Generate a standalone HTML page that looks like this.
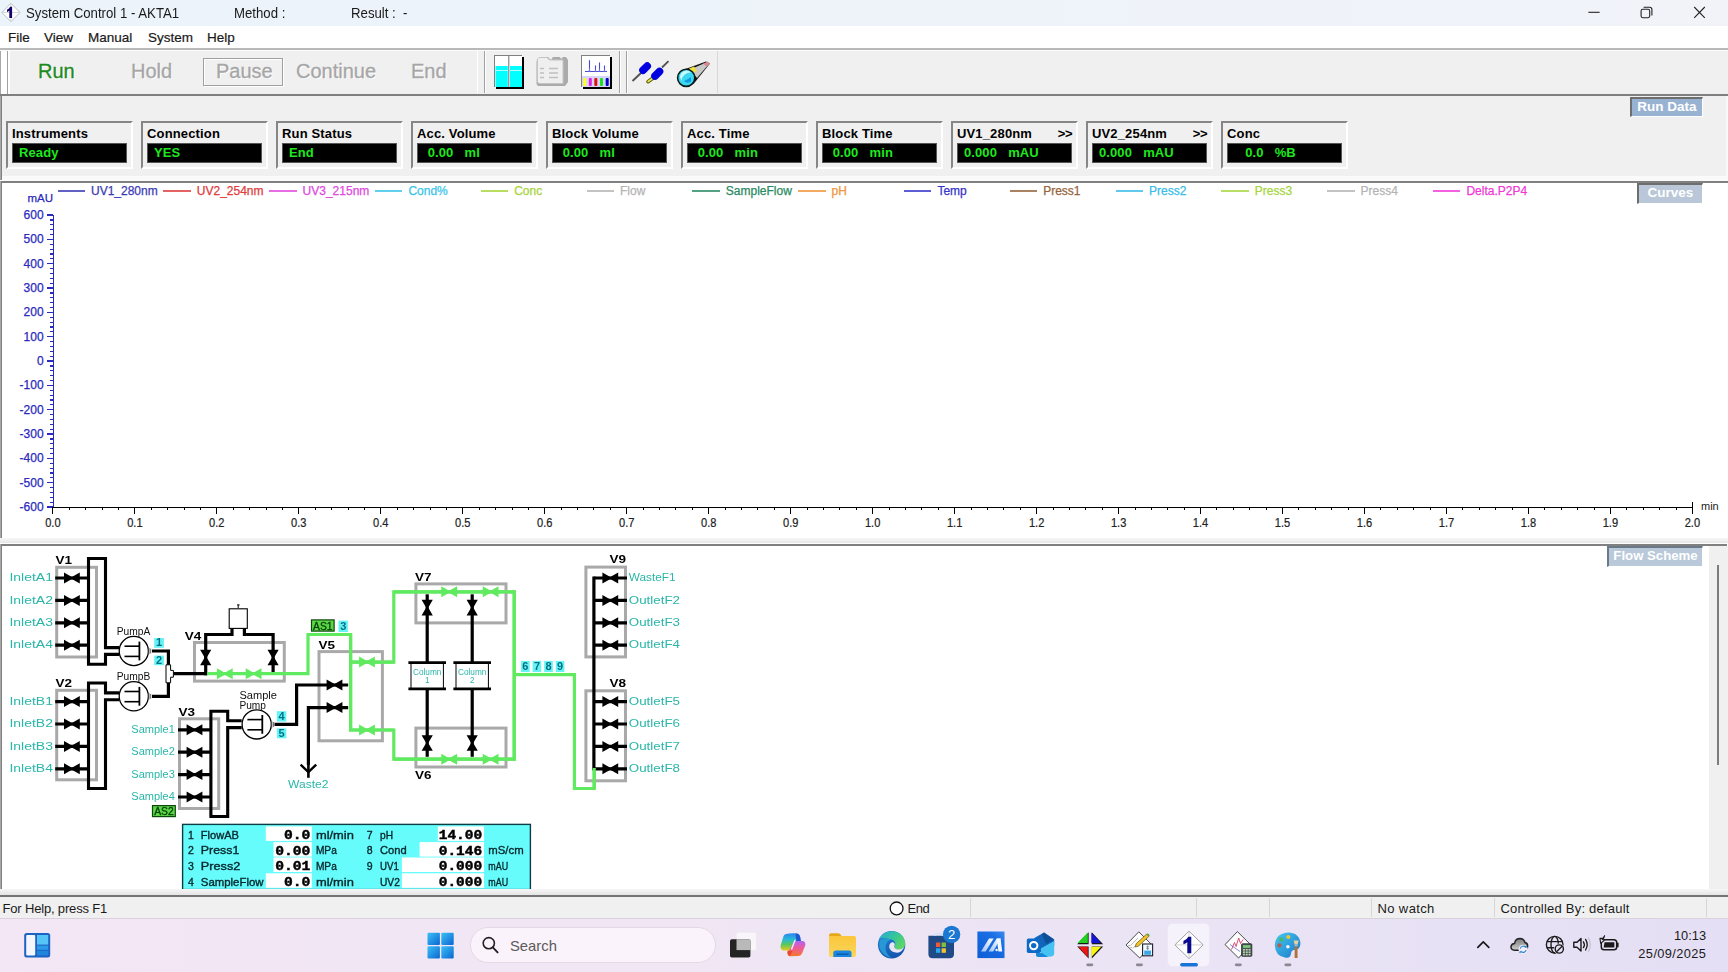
<!DOCTYPE html>
<html><head><meta charset="utf-8">
<style>
*{box-sizing:border-box;margin:0;padding:0}
html,body{width:1728px;height:972px;overflow:hidden;background:#fff;font-family:"Liberation Sans",sans-serif;}
.abs{position:absolute}
#title{left:0;top:0;width:1728px;height:26px;background:linear-gradient(90deg,#ebf3fb 0%,#eef3fa 50%,#f1f3f9 100%);}
#title span{position:absolute;top:6px;font-size:13.8px;color:#1a1a1a;white-space:nowrap;transform:scaleX(0.957);transform-origin:left center}
#menu{left:0;top:26px;width:1728px;height:22px;background:#fff}
#menu span{position:absolute;top:3.6px;font-size:13.5px;color:#1a1a1a;-webkit-text-stroke:0.2px #1a1a1a}
#toolbar{left:0;top:48px;width:1728px;height:47px;background:#f0f0f0;}
.tb{position:absolute;top:12px;font-size:20px;color:#a6a6a6;white-space:nowrap;text-shadow:1px 1px 0 #fff;-webkit-text-stroke:0.3px currentColor}
#rundata{left:0;top:95px;width:1728px;height:85px;background:#f0f0f0}
.rd{position:absolute;top:26px;width:127px;height:48px;border:2px solid;border-color:#868686 #fff #fff #868686;}
.rd b{position:absolute;left:4px;top:3px;font-size:13px;color:#000;white-space:nowrap;letter-spacing:0.15px}
.rd i{position:absolute;left:4px;top:20px;width:115px;height:20px;background:#000;border:1px solid #555;font-style:normal;font-weight:bold;font-size:13px;color:#1ee81e;line-height:17px;white-space:pre;padding-left:6px;letter-spacing:0.1px}
.rd u{position:absolute;right:4px;top:3px;font-size:13px;font-weight:bold;text-decoration:none;letter-spacing:-0.5px}
.plabel{position:absolute;color:#fff;font-weight:bold;font-size:13.5px;text-align:center;border:1px solid;border-color:#6e6e6e #fff #fff #6e6e6e;border-width:2px 1px 1px 2px;line-height:15px;white-space:nowrap}
#chart{left:0;top:181px;width:1728px;height:362px;background:#fff}
#flow{left:0;top:543px;width:1728px;height:354px;background:#fff}
#status{left:0;top:897px;width:1728px;height:21px;background:#f0f0f0}
#status span{position:absolute;top:4px;font-size:13px;color:#1a1a1a;white-space:nowrap}
#taskbar{left:0;top:918px;width:1728px;height:54px;background:linear-gradient(90deg,#f3e6f5 0%,#f0e6f4 40%,#ebe4f5 65%,#e5dff5 100%)}
.sep{position:absolute;top:1px;width:1px;height:19px;background:#d6d6d6}
</style></head><body>
<div id="title" class="abs">
<svg class="abs" style="left:0;top:0" width="1728" height="26">
<path d="M10.9 3.3 L20 12.5 L10.9 21.7 L1.9 12.5 Z" fill="#fff" stroke="#b4b8bc" stroke-width="0.9"/>
<path d="M2.5 12.5 H19.4 M10.9 4 V21" stroke="#c4c8c4" stroke-width="0.7"/>
<path d="M12.1 6.8 V18.1 H9.3 V10.7 Q8.2 11.5 7 11.9 V9.7 Q9.3 8.8 10.1 6.8 Z" fill="#12066e"/>
<path d="M1588.4 12.3 H1599.6" stroke="#222" stroke-width="1.1"/>
<rect x="1641.1" y="9.3" width="8.6" height="8.4" rx="1.6" fill="none" stroke="#222" stroke-width="1.1"/>
<path d="M1643.6 7.2 H1649.6 Q1651.9 7.2 1651.9 9.5 V15.6" fill="none" stroke="#222" stroke-width="1.1"/>
<path d="M1694.2 7 L1704.8 17.8 M1704.8 7 L1694.2 17.8" stroke="#222" stroke-width="1.1"/>
</svg>
<span style="left:26px">System Control 1 - AKTA1</span>
<span style="left:234px">Method :</span>
<span style="left:351px">Result :&nbsp; -</span>
</div>
<div id="menu" class="abs">
<span style="left:8px">File</span><span style="left:44px">View</span><span style="left:88px">Manual</span><span style="left:148px">System</span><span style="left:207px">Help</span>
</div>
<div id="toolbar" class="abs">
<span class="tb" style="left:38px;color:#1e8a1e">Run</span>
<span class="tb" style="left:131px">Hold</span>
<span class="tb" style="left:216px">Pause</span>
<span class="tb" style="left:296px">Continue</span>
<span class="tb" style="left:411px">End</span>

<div class="abs" style="left:0;top:0;width:1728px;height:2px;background:#b9b9b9"></div>
<div class="abs" style="left:0;top:2px;width:1728px;height:1px;background:#fbfbfb"></div>
<div class="abs" style="left:0;top:3px;width:1px;height:43px;background:#a8a8a8"></div>
<div class="abs" style="left:1px;top:3px;width:6px;height:43px;background:#fff"></div>
<div class="abs" style="left:7px;top:3px;width:1px;height:43px;background:#a0a0a0"></div>
<div class="abs" style="left:8px;top:3px;width:2px;height:43px;background:#fff"></div>
<div class="abs" style="left:203px;top:10px;width:80px;height:28px;border:1px solid #a0a0a0;box-shadow:inset 1px 1px 0 #fff, 1px 1px 0 #fff"></div>
<div class="abs" style="left:477px;top:3px;width:1px;height:42px;background:#fff"></div>
<div class="abs" style="left:484px;top:3px;width:1px;height:42px;background:#a0a0a0"></div>
<div class="abs" style="left:485px;top:3px;width:1px;height:42px;background:#fff"></div>
<div class="abs" style="left:619px;top:3px;width:1px;height:42px;background:#a0a0a0"></div>
<div class="abs" style="left:620px;top:3px;width:1px;height:42px;background:#fff"></div>
<div class="abs" style="left:626px;top:3px;width:1px;height:42px;background:#a0a0a0"></div>
<div class="abs" style="left:627px;top:3px;width:1px;height:42px;background:#fff"></div>
<div class="abs" style="left:717px;top:3px;width:1px;height:42px;background:#d8d8d8"></div>

<svg class="abs" style="left:0;top:0" width="1728" height="47" viewBox="0 48 1728 47">
<!-- icon1 -->
<rect x="496" y="57" width="28" height="32" fill="#000"/>
<rect x="494" y="55" width="28" height="32" fill="#fff"/>
<rect x="494" y="55" width="28" height="1" fill="#808080"/><rect x="494" y="55" width="1" height="32" fill="#808080"/>
<rect x="495.5" y="66" width="12.3" height="21" fill="#00ffff"/><rect x="510" y="66" width="12" height="21" fill="#00ffff"/>
<rect x="495.5" y="70" width="26.5" height="1" fill="#b0ffff"/>
<rect x="508.3" y="56" width="1" height="31" fill="#707070"/>
<!-- icon2 -->
<path d="M539 59 L544 57 H548 L551 60 L553 57 H560 L561 59 L563 57 H566 L568 60 V82 L565 86 H538 L536.5 84 V61 Z" fill="#ababab"/>
<path d="M537.5 59 L539 57.5 H547 L549.5 60 H563 V83.5 H539 L537.5 82 Z" fill="#efefef" stroke="#c4c4c4" stroke-width="1"/>
<g stroke="#c0c0c0" stroke-width="1.3"><path d="M540 68.5h4M549 68.5h9M540 73h4M549 73h9M540 77.5h4M549 77.5h9"/></g>
<!-- icon3 -->
<rect x="583" y="57" width="29" height="32" fill="#000"/>
<rect x="581" y="55" width="29" height="32" fill="#fff"/>
<rect x="581" y="55" width="29" height="1" fill="#808080"/><rect x="581" y="55" width="1" height="32" fill="#808080"/>
<rect x="582" y="76" width="28" height="11" fill="#d6d6fa"/>
<path d="M585 71.5 H607 M589.5 71.5 V60.2 M595.5 71.5 V65.6 M599.5 71.5 V62.6 M604.5 71.5 V65.6" fill="none" stroke="#4848d4" stroke-width="1.1"/><path d="M588 71.5 Q589.3 70 589.5 67 Q589.7 70 591 71.5 M594.2 71.5 Q595.4 70.5 595.5 68.5 Q595.6 70.5 596.8 71.5 M598.2 71.5 Q599.4 70.5 599.5 68 Q599.6 70.5 600.8 71.5 M603.2 71.5 Q604.4 70.5 604.5 68.5 Q604.6 70.5 605.8 71.5" fill="#8080e0" stroke="none"/>
<rect x="583.3" y="78" width="3" height="8" rx="1" fill="#ffff20"/><rect x="588.8" y="78" width="3" height="8" rx="1" fill="#e020e0"/><rect x="594.3" y="78" width="3" height="8" rx="1" fill="#e01010"/><rect x="600" y="78" width="3" height="8" rx="1" fill="#20e020"/><rect x="605.7" y="78" width="3" height="8" rx="1" fill="#0000c8"/>
<!-- icon4 -->
<g stroke-linecap="butt">
<line x1="632.5" y1="81" x2="641" y2="73" stroke="#505050" stroke-width="1.8"/>
<line x1="643" y1="70.3" x2="647.2" y2="66.1" stroke="#0000e0" stroke-width="7.6" stroke-linecap="round"/>
<line x1="662" y1="67.5" x2="668.5" y2="61.2" stroke="#505050" stroke-width="1.8"/>
<line x1="648" y1="81.7" x2="653" y2="78" stroke="#606000" stroke-width="3.6" stroke-linecap="round"/>
<line x1="648.2" y1="81.5" x2="653" y2="78" stroke="#e8e860" stroke-width="1.6" stroke-linecap="round"/>
<line x1="655" y1="76" x2="659.5" y2="71.5" stroke="#0000e0" stroke-width="7.6" stroke-linecap="round"/>
</g>
<!-- icon5 -->
<path d="M680 71 L706 61.5 L710 63.5 L693.5 84 Z" fill="#111"/>
<path d="M690 69.5 L705 63 L708.5 64.5 L697 78 Z" fill="#c8c8c8"/>
<path d="M703 63.8 L707.5 61.6 L710 63.4 L707 66.8 Z" fill="#d88a92"/>
<path d="M689 68.5 L694 66.5 L697 71 L693 73 Z" fill="#f0e040"/>
<circle cx="686.2" cy="77.8" r="8.6" fill="#3cd8f0" stroke="#0a1a1a" stroke-width="1.6"/>
<path d="M680 77 A6.5 6.5 0 0 1 691 72.5 A9 9 0 0 0 681.5 81 Z" fill="#c8fbff"/>
<path d="M684 81 Q687 84 691 81.5 L691 77 L688 79 Z" fill="#1098e0"/>
</svg>

</div>
<div id="rundata" class="abs">
<div class="abs" style="left:0;top:0;width:1px;height:85px;background:#a8a8a8"></div><div class="abs" style="left:0;top:-1px;width:1728px;height:2px;background:#808080"></div>
<div class="abs" style="left:1px;top:-1px;width:1px;height:86px;background:#808080"></div>
<div class="rd" style="left:6px"><b>Instruments</b><i>Ready</i></div>
<div class="rd" style="left:141px"><b>Connection</b><i>YES</i></div>
<div class="rd" style="left:276px"><b>Run Status</b><i>End</i></div>
<div class="rd" style="left:411px"><b>Acc. Volume</b><i> 0.00   ml</i></div>
<div class="rd" style="left:546px"><b>Block Volume</b><i> 0.00   ml</i></div>
<div class="rd" style="left:681px"><b>Acc. Time</b><i> 0.00   min</i></div>
<div class="rd" style="left:816px"><b>Block Time</b><i> 0.00   min</i></div>
<div class="rd" style="left:951px"><b>UV1_280nm</b><u>>></u><i>0.000   mAU</i></div>
<div class="rd" style="left:1086px"><b>UV2_254nm</b><u>>></u><i>0.000   mAU</i></div>
<div class="rd" style="left:1221px"><b>Conc</b><i>   0.0   %B</i></div>
<div class="plabel" style="left:1630px;top:2px;width:73px;height:20px;background:#98b2d2">Run Data</div>
<div class="abs" style="left:2px;top:81px;width:1726px;height:5px;background:#fafafa"></div><div class="abs" style="left:1726px;top:1px;width:2px;height:84px;background:#fafafa"></div>
</div>
<div id="chart" class="abs">
<svg class="abs" style="left:0;top:0" width="1728" height="362" viewBox="0 181 1728 362" font-family="Liberation Sans, sans-serif" shape-rendering="crispEdges">
<rect x="57.5" y="190" width="27.5" height="2" fill="#3a3ab4" opacity="0.8"/>
<text x="91.0" y="195" font-size="12" fill="#3a3ab4" stroke="#3a3ab4" stroke-width="0.25" shape-rendering="auto">UV1_280nm</text>
<rect x="163.3" y="190" width="27.5" height="2" fill="#e03c3c" opacity="0.8"/>
<text x="196.8" y="195" font-size="12" fill="#e03c3c" stroke="#e03c3c" stroke-width="0.25" shape-rendering="auto">UV2_254nm</text>
<rect x="269.1" y="190" width="27.5" height="2" fill="#e048e0" opacity="0.8"/>
<text x="302.6" y="195" font-size="12" fill="#e048e0" stroke="#e048e0" stroke-width="0.25" shape-rendering="auto">UV3_215nm</text>
<rect x="374.9" y="190" width="27.5" height="2" fill="#38c4e8" opacity="0.8"/>
<text x="408.4" y="195" font-size="12" fill="#38c4e8" stroke="#38c4e8" stroke-width="0.25" shape-rendering="auto">Cond%</text>
<rect x="480.7" y="190" width="27.5" height="2" fill="#a6d438" opacity="0.8"/>
<text x="514.2" y="195" font-size="12" fill="#a6d438" stroke="#a6d438" stroke-width="0.25" shape-rendering="auto">Conc</text>
<rect x="586.5" y="190" width="27.5" height="2" fill="#b4b4b4" opacity="0.8"/>
<text x="620.0" y="195" font-size="12" fill="#b4b4b4" stroke="#b4b4b4" stroke-width="0.25" shape-rendering="auto">Flow</text>
<rect x="692.3" y="190" width="27.5" height="2" fill="#2a8a64" opacity="0.8"/>
<text x="725.8" y="195" font-size="12" fill="#2a8a64" stroke="#2a8a64" stroke-width="0.25" shape-rendering="auto">SampleFlow</text>
<rect x="798.1" y="190" width="27.5" height="2" fill="#f0963c" opacity="0.8"/>
<text x="831.6" y="195" font-size="12" fill="#f0963c" stroke="#f0963c" stroke-width="0.25" shape-rendering="auto">pH</text>
<rect x="903.9" y="190" width="27.5" height="2" fill="#3434c8" opacity="0.8"/>
<text x="937.4" y="195" font-size="12" fill="#3434c8" stroke="#3434c8" stroke-width="0.25" shape-rendering="auto">Temp</text>
<rect x="1009.7" y="190" width="27.5" height="2" fill="#96643c" opacity="0.8"/>
<text x="1043.2" y="195" font-size="12" fill="#96643c" stroke="#96643c" stroke-width="0.25" shape-rendering="auto">Press1</text>
<rect x="1115.5" y="190" width="27.5" height="2" fill="#38bce8" opacity="0.8"/>
<text x="1149.0" y="195" font-size="12" fill="#38bce8" stroke="#38bce8" stroke-width="0.25" shape-rendering="auto">Press2</text>
<rect x="1221.3" y="190" width="27.5" height="2" fill="#a6d640" opacity="0.8"/>
<text x="1254.8" y="195" font-size="12" fill="#a6d640" stroke="#a6d640" stroke-width="0.25" shape-rendering="auto">Press3</text>
<rect x="1327.1" y="190" width="27.5" height="2" fill="#b4b4b4" opacity="0.8"/>
<text x="1360.6" y="195" font-size="12" fill="#b4b4b4" stroke="#b4b4b4" stroke-width="0.25" shape-rendering="auto">Press4</text>
<rect x="1432.9" y="190" width="27.5" height="2" fill="#f038d8" opacity="0.8"/>
<text x="1466.4" y="195" font-size="12" fill="#f038d8" stroke="#f038d8" stroke-width="0.25" shape-rendering="auto">Delta.P2P4</text>
<text x="27.5" y="202.2" font-size="11.5" fill="#2a2abc" stroke="#2a2abc" stroke-width="0.25">mAU</text>
<rect x="52.6" y="215" width="1.6" height="293" fill="#2a2abc"/>
<rect x="46.5" y="214.4" width="6.5" height="1.2" fill="#2a2abc"/>
<text x="43.6" y="218.9" font-size="12" fill="#2a2abc" stroke="#2a2abc" stroke-width="0.25" text-anchor="end">600</text>
<rect x="49.8" y="219.3" width="3" height="1.2" fill="#2a2abc"/>
<rect x="49.8" y="224.1" width="3" height="1.2" fill="#2a2abc"/>
<rect x="49.8" y="229.0" width="3" height="1.2" fill="#2a2abc"/>
<rect x="49.8" y="233.9" width="3" height="1.2" fill="#2a2abc"/>
<rect x="46.5" y="238.7" width="6.5" height="1.2" fill="#2a2abc"/>
<text x="43.6" y="243.2" font-size="12" fill="#2a2abc" stroke="#2a2abc" stroke-width="0.25" text-anchor="end">500</text>
<rect x="49.8" y="243.6" width="3" height="1.2" fill="#2a2abc"/>
<rect x="49.8" y="248.5" width="3" height="1.2" fill="#2a2abc"/>
<rect x="49.8" y="253.3" width="3" height="1.2" fill="#2a2abc"/>
<rect x="49.8" y="258.2" width="3" height="1.2" fill="#2a2abc"/>
<rect x="46.5" y="263.1" width="6.5" height="1.2" fill="#2a2abc"/>
<text x="43.6" y="267.6" font-size="12" fill="#2a2abc" stroke="#2a2abc" stroke-width="0.25" text-anchor="end">400</text>
<rect x="49.8" y="267.9" width="3" height="1.2" fill="#2a2abc"/>
<rect x="49.8" y="272.8" width="3" height="1.2" fill="#2a2abc"/>
<rect x="49.8" y="277.7" width="3" height="1.2" fill="#2a2abc"/>
<rect x="49.8" y="282.5" width="3" height="1.2" fill="#2a2abc"/>
<rect x="46.5" y="287.4" width="6.5" height="1.2" fill="#2a2abc"/>
<text x="43.6" y="291.9" font-size="12" fill="#2a2abc" stroke="#2a2abc" stroke-width="0.25" text-anchor="end">300</text>
<rect x="49.8" y="292.3" width="3" height="1.2" fill="#2a2abc"/>
<rect x="49.8" y="297.1" width="3" height="1.2" fill="#2a2abc"/>
<rect x="49.8" y="302.0" width="3" height="1.2" fill="#2a2abc"/>
<rect x="49.8" y="306.9" width="3" height="1.2" fill="#2a2abc"/>
<rect x="46.5" y="311.7" width="6.5" height="1.2" fill="#2a2abc"/>
<text x="43.6" y="316.2" font-size="12" fill="#2a2abc" stroke="#2a2abc" stroke-width="0.25" text-anchor="end">200</text>
<rect x="49.8" y="316.6" width="3" height="1.2" fill="#2a2abc"/>
<rect x="49.8" y="321.5" width="3" height="1.2" fill="#2a2abc"/>
<rect x="49.8" y="326.3" width="3" height="1.2" fill="#2a2abc"/>
<rect x="49.8" y="331.2" width="3" height="1.2" fill="#2a2abc"/>
<rect x="46.5" y="336.1" width="6.5" height="1.2" fill="#2a2abc"/>
<text x="43.6" y="340.6" font-size="12" fill="#2a2abc" stroke="#2a2abc" stroke-width="0.25" text-anchor="end">100</text>
<rect x="49.8" y="340.9" width="3" height="1.2" fill="#2a2abc"/>
<rect x="49.8" y="345.8" width="3" height="1.2" fill="#2a2abc"/>
<rect x="49.8" y="350.7" width="3" height="1.2" fill="#2a2abc"/>
<rect x="49.8" y="355.5" width="3" height="1.2" fill="#2a2abc"/>
<rect x="46.5" y="360.4" width="6.5" height="1.2" fill="#2a2abc"/>
<text x="43.6" y="364.9" font-size="12" fill="#2a2abc" stroke="#2a2abc" stroke-width="0.25" text-anchor="end">0</text>
<rect x="49.8" y="365.3" width="3" height="1.2" fill="#2a2abc"/>
<rect x="49.8" y="370.1" width="3" height="1.2" fill="#2a2abc"/>
<rect x="49.8" y="375.0" width="3" height="1.2" fill="#2a2abc"/>
<rect x="49.8" y="379.9" width="3" height="1.2" fill="#2a2abc"/>
<rect x="46.5" y="384.7" width="6.5" height="1.2" fill="#2a2abc"/>
<text x="43.6" y="389.2" font-size="12" fill="#2a2abc" stroke="#2a2abc" stroke-width="0.25" text-anchor="end">-100</text>
<rect x="49.8" y="389.6" width="3" height="1.2" fill="#2a2abc"/>
<rect x="49.8" y="394.5" width="3" height="1.2" fill="#2a2abc"/>
<rect x="49.8" y="399.3" width="3" height="1.2" fill="#2a2abc"/>
<rect x="49.8" y="404.2" width="3" height="1.2" fill="#2a2abc"/>
<rect x="46.5" y="409.1" width="6.5" height="1.2" fill="#2a2abc"/>
<text x="43.6" y="413.6" font-size="12" fill="#2a2abc" stroke="#2a2abc" stroke-width="0.25" text-anchor="end">-200</text>
<rect x="49.8" y="413.9" width="3" height="1.2" fill="#2a2abc"/>
<rect x="49.8" y="418.8" width="3" height="1.2" fill="#2a2abc"/>
<rect x="49.8" y="423.7" width="3" height="1.2" fill="#2a2abc"/>
<rect x="49.8" y="428.5" width="3" height="1.2" fill="#2a2abc"/>
<rect x="46.5" y="433.4" width="6.5" height="1.2" fill="#2a2abc"/>
<text x="43.6" y="437.9" font-size="12" fill="#2a2abc" stroke="#2a2abc" stroke-width="0.25" text-anchor="end">-300</text>
<rect x="49.8" y="438.3" width="3" height="1.2" fill="#2a2abc"/>
<rect x="49.8" y="443.1" width="3" height="1.2" fill="#2a2abc"/>
<rect x="49.8" y="448.0" width="3" height="1.2" fill="#2a2abc"/>
<rect x="49.8" y="452.9" width="3" height="1.2" fill="#2a2abc"/>
<rect x="46.5" y="457.7" width="6.5" height="1.2" fill="#2a2abc"/>
<text x="43.6" y="462.2" font-size="12" fill="#2a2abc" stroke="#2a2abc" stroke-width="0.25" text-anchor="end">-400</text>
<rect x="49.8" y="462.6" width="3" height="1.2" fill="#2a2abc"/>
<rect x="49.8" y="467.5" width="3" height="1.2" fill="#2a2abc"/>
<rect x="49.8" y="472.3" width="3" height="1.2" fill="#2a2abc"/>
<rect x="49.8" y="477.2" width="3" height="1.2" fill="#2a2abc"/>
<rect x="46.5" y="482.1" width="6.5" height="1.2" fill="#2a2abc"/>
<text x="43.6" y="486.6" font-size="12" fill="#2a2abc" stroke="#2a2abc" stroke-width="0.25" text-anchor="end">-500</text>
<rect x="49.8" y="486.9" width="3" height="1.2" fill="#2a2abc"/>
<rect x="49.8" y="491.8" width="3" height="1.2" fill="#2a2abc"/>
<rect x="49.8" y="496.7" width="3" height="1.2" fill="#2a2abc"/>
<rect x="49.8" y="501.5" width="3" height="1.2" fill="#2a2abc"/>
<rect x="46.5" y="506.4" width="6.5" height="1.2" fill="#2a2abc"/>
<text x="43.6" y="510.9" font-size="12" fill="#2a2abc" stroke="#2a2abc" stroke-width="0.25" text-anchor="end">-600</text>
<rect x="52.5" y="506.5" width="1640" height="1.2" fill="#000"/>
<rect x="52.4" y="507" width="1" height="6.6" fill="#000"/>
<text x="52.9" y="527" font-size="12" fill="#222" stroke="#222" stroke-width="0.2" text-anchor="middle" textLength="15.4" lengthAdjust="spacingAndGlyphs">0.0</text>
<rect x="68.8" y="507" width="1" height="3.1" fill="#000"/>
<rect x="85.2" y="507" width="1" height="3.1" fill="#000"/>
<rect x="101.6" y="507" width="1" height="3.1" fill="#000"/>
<rect x="118.0" y="507" width="1" height="3.1" fill="#000"/>
<rect x="134.4" y="507" width="1" height="6.6" fill="#000"/>
<text x="134.9" y="527" font-size="12" fill="#222" stroke="#222" stroke-width="0.2" text-anchor="middle" textLength="15.4" lengthAdjust="spacingAndGlyphs">0.1</text>
<rect x="150.8" y="507" width="1" height="3.1" fill="#000"/>
<rect x="167.2" y="507" width="1" height="3.1" fill="#000"/>
<rect x="183.6" y="507" width="1" height="3.1" fill="#000"/>
<rect x="200.0" y="507" width="1" height="3.1" fill="#000"/>
<rect x="216.3" y="507" width="1" height="6.6" fill="#000"/>
<text x="216.8" y="527" font-size="12" fill="#222" stroke="#222" stroke-width="0.2" text-anchor="middle" textLength="15.4" lengthAdjust="spacingAndGlyphs">0.2</text>
<rect x="232.7" y="507" width="1" height="3.1" fill="#000"/>
<rect x="249.1" y="507" width="1" height="3.1" fill="#000"/>
<rect x="265.5" y="507" width="1" height="3.1" fill="#000"/>
<rect x="281.9" y="507" width="1" height="3.1" fill="#000"/>
<rect x="298.3" y="507" width="1" height="6.6" fill="#000"/>
<text x="298.8" y="527" font-size="12" fill="#222" stroke="#222" stroke-width="0.2" text-anchor="middle" textLength="15.4" lengthAdjust="spacingAndGlyphs">0.3</text>
<rect x="314.7" y="507" width="1" height="3.1" fill="#000"/>
<rect x="331.1" y="507" width="1" height="3.1" fill="#000"/>
<rect x="347.5" y="507" width="1" height="3.1" fill="#000"/>
<rect x="363.9" y="507" width="1" height="3.1" fill="#000"/>
<rect x="380.3" y="507" width="1" height="6.6" fill="#000"/>
<text x="380.8" y="527" font-size="12" fill="#222" stroke="#222" stroke-width="0.2" text-anchor="middle" textLength="15.4" lengthAdjust="spacingAndGlyphs">0.4</text>
<rect x="396.7" y="507" width="1" height="3.1" fill="#000"/>
<rect x="413.1" y="507" width="1" height="3.1" fill="#000"/>
<rect x="429.5" y="507" width="1" height="3.1" fill="#000"/>
<rect x="445.9" y="507" width="1" height="3.1" fill="#000"/>
<rect x="462.3" y="507" width="1" height="6.6" fill="#000"/>
<text x="462.8" y="527" font-size="12" fill="#222" stroke="#222" stroke-width="0.2" text-anchor="middle" textLength="15.4" lengthAdjust="spacingAndGlyphs">0.5</text>
<rect x="478.7" y="507" width="1" height="3.1" fill="#000"/>
<rect x="495.1" y="507" width="1" height="3.1" fill="#000"/>
<rect x="511.5" y="507" width="1" height="3.1" fill="#000"/>
<rect x="527.9" y="507" width="1" height="3.1" fill="#000"/>
<rect x="544.2" y="507" width="1" height="6.6" fill="#000"/>
<text x="544.8" y="527" font-size="12" fill="#222" stroke="#222" stroke-width="0.2" text-anchor="middle" textLength="15.4" lengthAdjust="spacingAndGlyphs">0.6</text>
<rect x="560.6" y="507" width="1" height="3.1" fill="#000"/>
<rect x="577.0" y="507" width="1" height="3.1" fill="#000"/>
<rect x="593.4" y="507" width="1" height="3.1" fill="#000"/>
<rect x="609.8" y="507" width="1" height="3.1" fill="#000"/>
<rect x="626.2" y="507" width="1" height="6.6" fill="#000"/>
<text x="626.7" y="527" font-size="12" fill="#222" stroke="#222" stroke-width="0.2" text-anchor="middle" textLength="15.4" lengthAdjust="spacingAndGlyphs">0.7</text>
<rect x="642.6" y="507" width="1" height="3.1" fill="#000"/>
<rect x="659.0" y="507" width="1" height="3.1" fill="#000"/>
<rect x="675.4" y="507" width="1" height="3.1" fill="#000"/>
<rect x="691.8" y="507" width="1" height="3.1" fill="#000"/>
<rect x="708.2" y="507" width="1" height="6.6" fill="#000"/>
<text x="708.7" y="527" font-size="12" fill="#222" stroke="#222" stroke-width="0.2" text-anchor="middle" textLength="15.4" lengthAdjust="spacingAndGlyphs">0.8</text>
<rect x="724.6" y="507" width="1" height="3.1" fill="#000"/>
<rect x="741.0" y="507" width="1" height="3.1" fill="#000"/>
<rect x="757.4" y="507" width="1" height="3.1" fill="#000"/>
<rect x="773.8" y="507" width="1" height="3.1" fill="#000"/>
<rect x="790.2" y="507" width="1" height="6.6" fill="#000"/>
<text x="790.7" y="527" font-size="12" fill="#222" stroke="#222" stroke-width="0.2" text-anchor="middle" textLength="15.4" lengthAdjust="spacingAndGlyphs">0.9</text>
<rect x="806.6" y="507" width="1" height="3.1" fill="#000"/>
<rect x="823.0" y="507" width="1" height="3.1" fill="#000"/>
<rect x="839.4" y="507" width="1" height="3.1" fill="#000"/>
<rect x="855.8" y="507" width="1" height="3.1" fill="#000"/>
<rect x="872.1" y="507" width="1" height="6.6" fill="#000"/>
<text x="872.6" y="527" font-size="12" fill="#222" stroke="#222" stroke-width="0.2" text-anchor="middle" textLength="15.4" lengthAdjust="spacingAndGlyphs">1.0</text>
<rect x="888.5" y="507" width="1" height="3.1" fill="#000"/>
<rect x="904.9" y="507" width="1" height="3.1" fill="#000"/>
<rect x="921.3" y="507" width="1" height="3.1" fill="#000"/>
<rect x="937.7" y="507" width="1" height="3.1" fill="#000"/>
<rect x="954.1" y="507" width="1" height="6.6" fill="#000"/>
<text x="954.6" y="527" font-size="12" fill="#222" stroke="#222" stroke-width="0.2" text-anchor="middle" textLength="15.4" lengthAdjust="spacingAndGlyphs">1.1</text>
<rect x="970.5" y="507" width="1" height="3.1" fill="#000"/>
<rect x="986.9" y="507" width="1" height="3.1" fill="#000"/>
<rect x="1003.3" y="507" width="1" height="3.1" fill="#000"/>
<rect x="1019.7" y="507" width="1" height="3.1" fill="#000"/>
<rect x="1036.1" y="507" width="1" height="6.6" fill="#000"/>
<text x="1036.6" y="527" font-size="12" fill="#222" stroke="#222" stroke-width="0.2" text-anchor="middle" textLength="15.4" lengthAdjust="spacingAndGlyphs">1.2</text>
<rect x="1052.5" y="507" width="1" height="3.1" fill="#000"/>
<rect x="1068.9" y="507" width="1" height="3.1" fill="#000"/>
<rect x="1085.3" y="507" width="1" height="3.1" fill="#000"/>
<rect x="1101.7" y="507" width="1" height="3.1" fill="#000"/>
<rect x="1118.1" y="507" width="1" height="6.6" fill="#000"/>
<text x="1118.6" y="527" font-size="12" fill="#222" stroke="#222" stroke-width="0.2" text-anchor="middle" textLength="15.4" lengthAdjust="spacingAndGlyphs">1.3</text>
<rect x="1134.5" y="507" width="1" height="3.1" fill="#000"/>
<rect x="1150.9" y="507" width="1" height="3.1" fill="#000"/>
<rect x="1167.3" y="507" width="1" height="3.1" fill="#000"/>
<rect x="1183.7" y="507" width="1" height="3.1" fill="#000"/>
<rect x="1200.0" y="507" width="1" height="6.6" fill="#000"/>
<text x="1200.5" y="527" font-size="12" fill="#222" stroke="#222" stroke-width="0.2" text-anchor="middle" textLength="15.4" lengthAdjust="spacingAndGlyphs">1.4</text>
<rect x="1216.4" y="507" width="1" height="3.1" fill="#000"/>
<rect x="1232.8" y="507" width="1" height="3.1" fill="#000"/>
<rect x="1249.2" y="507" width="1" height="3.1" fill="#000"/>
<rect x="1265.6" y="507" width="1" height="3.1" fill="#000"/>
<rect x="1282.0" y="507" width="1" height="6.6" fill="#000"/>
<text x="1282.5" y="527" font-size="12" fill="#222" stroke="#222" stroke-width="0.2" text-anchor="middle" textLength="15.4" lengthAdjust="spacingAndGlyphs">1.5</text>
<rect x="1298.4" y="507" width="1" height="3.1" fill="#000"/>
<rect x="1314.8" y="507" width="1" height="3.1" fill="#000"/>
<rect x="1331.2" y="507" width="1" height="3.1" fill="#000"/>
<rect x="1347.6" y="507" width="1" height="3.1" fill="#000"/>
<rect x="1364.0" y="507" width="1" height="6.6" fill="#000"/>
<text x="1364.5" y="527" font-size="12" fill="#222" stroke="#222" stroke-width="0.2" text-anchor="middle" textLength="15.4" lengthAdjust="spacingAndGlyphs">1.6</text>
<rect x="1380.4" y="507" width="1" height="3.1" fill="#000"/>
<rect x="1396.8" y="507" width="1" height="3.1" fill="#000"/>
<rect x="1413.2" y="507" width="1" height="3.1" fill="#000"/>
<rect x="1429.6" y="507" width="1" height="3.1" fill="#000"/>
<rect x="1446.0" y="507" width="1" height="6.6" fill="#000"/>
<text x="1446.5" y="527" font-size="12" fill="#222" stroke="#222" stroke-width="0.2" text-anchor="middle" textLength="15.4" lengthAdjust="spacingAndGlyphs">1.7</text>
<rect x="1462.4" y="507" width="1" height="3.1" fill="#000"/>
<rect x="1478.8" y="507" width="1" height="3.1" fill="#000"/>
<rect x="1495.2" y="507" width="1" height="3.1" fill="#000"/>
<rect x="1511.6" y="507" width="1" height="3.1" fill="#000"/>
<rect x="1528.0" y="507" width="1" height="6.6" fill="#000"/>
<text x="1528.5" y="527" font-size="12" fill="#222" stroke="#222" stroke-width="0.2" text-anchor="middle" textLength="15.4" lengthAdjust="spacingAndGlyphs">1.8</text>
<rect x="1544.3" y="507" width="1" height="3.1" fill="#000"/>
<rect x="1560.7" y="507" width="1" height="3.1" fill="#000"/>
<rect x="1577.1" y="507" width="1" height="3.1" fill="#000"/>
<rect x="1593.5" y="507" width="1" height="3.1" fill="#000"/>
<rect x="1609.9" y="507" width="1" height="6.6" fill="#000"/>
<text x="1610.4" y="527" font-size="12" fill="#222" stroke="#222" stroke-width="0.2" text-anchor="middle" textLength="15.4" lengthAdjust="spacingAndGlyphs">1.9</text>
<rect x="1626.3" y="507" width="1" height="3.1" fill="#000"/>
<rect x="1642.7" y="507" width="1" height="3.1" fill="#000"/>
<rect x="1659.1" y="507" width="1" height="3.1" fill="#000"/>
<rect x="1675.5" y="507" width="1" height="3.1" fill="#000"/>
<rect x="1691.9" y="507" width="1" height="6.6" fill="#000"/>
<text x="1692.4" y="527" font-size="12" fill="#222" stroke="#222" stroke-width="0.2" text-anchor="middle" textLength="15.4" lengthAdjust="spacingAndGlyphs">2.0</text>
<rect x="1692" y="502" width="1" height="6" fill="#000"/>
<text x="1701" y="510" font-size="11" fill="#222">min</text>
</svg>
<div class="abs" style="left:0;top:0;width:1728px;height:2px;background:#808080"></div><div class="abs" style="left:0;top:0;width:1px;height:362px;background:#a8a8a8"></div><div class="abs" style="left:1px;top:0;width:1px;height:357px;background:#808080"></div>
<div class="abs" style="left:0;top:357px;width:1728px;height:6px;background:linear-gradient(#f7f7f7,#e4e4e4)"></div>
<div class="plabel" style="left:1637px;top:2px;width:66px;height:21px;background:#b9c7d9;line-height:16px">Curves</div>
</div>
<div id="flow" class="abs">
<!--FLOW-->
<svg class="abs" style="left:0;top:0;filter:blur(0.45px)" width="1728" height="352" viewBox="0 543 1728 352">
<g><rect x="56.7" y="567.3" width="39.8" height="89.7" fill="none" stroke="#a9a9a9" stroke-width="3.0"/>
<path d="M55.2 578.0 L88.0 578.0" fill="none" stroke="#000" stroke-width="3.2" stroke-linecap="butt" stroke-linejoin="miter"/>
<path d="M64.0 572.5 L73.7 578.0 L64.0 583.5 Z M79.8 572.5 L70.1 578.0 L79.8 583.5 Z" fill="#000"/>
<text x="9.5" y="581.1" font-family="Liberation Sans, sans-serif" font-size="10.0" fill="#2ab6a8" textLength="43.4" lengthAdjust="spacingAndGlyphs" text-anchor="start">InletA1</text>
<path d="M55.2 600.4 L88.0 600.4" fill="none" stroke="#000" stroke-width="3.2" stroke-linecap="butt" stroke-linejoin="miter"/>
<path d="M64.0 594.9 L73.7 600.4 L64.0 605.9 Z M79.8 594.9 L70.1 600.4 L79.8 605.9 Z" fill="#000"/>
<text x="9.5" y="603.5" font-family="Liberation Sans, sans-serif" font-size="10.0" fill="#2ab6a8" textLength="43.4" lengthAdjust="spacingAndGlyphs" text-anchor="start">InletA2</text>
<path d="M55.2 622.8 L88.0 622.8" fill="none" stroke="#000" stroke-width="3.2" stroke-linecap="butt" stroke-linejoin="miter"/>
<path d="M64.0 617.3 L73.7 622.8 L64.0 628.3 Z M79.8 617.3 L70.1 622.8 L79.8 628.3 Z" fill="#000"/>
<text x="9.5" y="625.9" font-family="Liberation Sans, sans-serif" font-size="10.0" fill="#2ab6a8" textLength="43.4" lengthAdjust="spacingAndGlyphs" text-anchor="start">InletA3</text>
<path d="M55.2 645.2 L88.0 645.2" fill="none" stroke="#000" stroke-width="3.2" stroke-linecap="butt" stroke-linejoin="miter"/>
<path d="M64.0 639.7 L73.7 645.2 L64.0 650.7 Z M79.8 639.7 L70.1 645.2 L79.8 650.7 Z" fill="#000"/>
<text x="9.5" y="648.3" font-family="Liberation Sans, sans-serif" font-size="10.0" fill="#2ab6a8" textLength="43.4" lengthAdjust="spacingAndGlyphs" text-anchor="start">InletA4</text>
<path d="M119.5 647.6 L105.5 647.6 L105.5 558.5 L88.5 558.5 L88.5 664.3 L105.5 664.3 L105.5 654.4 L119.5 654.4" fill="none" stroke="#000" stroke-width="3.1" stroke-linecap="butt" stroke-linejoin="miter"/>
<text x="55.5" y="564.2" font-family="Liberation Sans, sans-serif" font-size="10.5" fill="#000" font-weight="bold" textLength="16.5" lengthAdjust="spacingAndGlyphs" text-anchor="start">V1</text>
<rect x="56.7" y="690.3" width="39.8" height="89.5" fill="none" stroke="#a9a9a9" stroke-width="3.0"/>
<path d="M55.2 701.6 L88.0 701.6" fill="none" stroke="#000" stroke-width="3.2" stroke-linecap="butt" stroke-linejoin="miter"/>
<path d="M64.0 696.1 L73.7 701.6 L64.0 707.1 Z M79.8 696.1 L70.1 701.6 L79.8 707.1 Z" fill="#000"/>
<text x="9.5" y="704.7" font-family="Liberation Sans, sans-serif" font-size="10.0" fill="#2ab6a8" textLength="43.4" lengthAdjust="spacingAndGlyphs" text-anchor="start">InletB1</text>
<path d="M55.2 724.0 L88.0 724.0" fill="none" stroke="#000" stroke-width="3.2" stroke-linecap="butt" stroke-linejoin="miter"/>
<path d="M64.0 718.5 L73.7 724.0 L64.0 729.5 Z M79.8 718.5 L70.1 724.0 L79.8 729.5 Z" fill="#000"/>
<text x="9.5" y="727.1" font-family="Liberation Sans, sans-serif" font-size="10.0" fill="#2ab6a8" textLength="43.4" lengthAdjust="spacingAndGlyphs" text-anchor="start">InletB2</text>
<path d="M55.2 746.4 L88.0 746.4" fill="none" stroke="#000" stroke-width="3.2" stroke-linecap="butt" stroke-linejoin="miter"/>
<path d="M64.0 740.9 L73.7 746.4 L64.0 751.9 Z M79.8 740.9 L70.1 746.4 L79.8 751.9 Z" fill="#000"/>
<text x="9.5" y="749.5" font-family="Liberation Sans, sans-serif" font-size="10.0" fill="#2ab6a8" textLength="43.4" lengthAdjust="spacingAndGlyphs" text-anchor="start">InletB3</text>
<path d="M55.2 768.8 L88.0 768.8" fill="none" stroke="#000" stroke-width="3.2" stroke-linecap="butt" stroke-linejoin="miter"/>
<path d="M64.0 763.3 L73.7 768.8 L64.0 774.3 Z M79.8 763.3 L70.1 768.8 L79.8 774.3 Z" fill="#000"/>
<text x="9.5" y="771.9" font-family="Liberation Sans, sans-serif" font-size="10.0" fill="#2ab6a8" textLength="43.4" lengthAdjust="spacingAndGlyphs" text-anchor="start">InletB4</text>
<path d="M119.5 692.9 L105.5 692.9 L105.5 683.0 L88.5 683.0 L88.5 788.5 L105.5 788.5 L105.5 699.7 L119.5 699.7" fill="none" stroke="#000" stroke-width="3.1" stroke-linecap="butt" stroke-linejoin="miter"/>
<text x="55.5" y="687.2" font-family="Liberation Sans, sans-serif" font-size="10.5" fill="#000" font-weight="bold" textLength="16.5" lengthAdjust="spacingAndGlyphs" text-anchor="start">V2</text>
<rect x="179.5" y="718.8" width="39.2" height="89.7" fill="none" stroke="#a9a9a9" stroke-width="3.0"/>
<path d="M178.0 729.8 L210.4 729.8" fill="none" stroke="#000" stroke-width="3.2" stroke-linecap="butt" stroke-linejoin="miter"/>
<path d="M186.6 724.3 L196.3 729.8 L186.6 735.3 Z M202.4 724.3 L192.7 729.8 L202.4 735.3 Z" fill="#000"/>
<text x="131.3" y="732.9" font-family="Liberation Sans, sans-serif" font-size="10.0" fill="#2ab6a8" textLength="43.5" lengthAdjust="spacingAndGlyphs" text-anchor="start">Sample1</text>
<path d="M178.0 752.2 L210.4 752.2" fill="none" stroke="#000" stroke-width="3.2" stroke-linecap="butt" stroke-linejoin="miter"/>
<path d="M186.6 746.7 L196.3 752.2 L186.6 757.7 Z M202.4 746.7 L192.7 752.2 L202.4 757.7 Z" fill="#000"/>
<text x="131.3" y="755.3" font-family="Liberation Sans, sans-serif" font-size="10.0" fill="#2ab6a8" textLength="43.5" lengthAdjust="spacingAndGlyphs" text-anchor="start">Sample2</text>
<path d="M178.0 774.6 L210.4 774.6" fill="none" stroke="#000" stroke-width="3.2" stroke-linecap="butt" stroke-linejoin="miter"/>
<path d="M186.6 769.1 L196.3 774.6 L186.6 780.1 Z M202.4 769.1 L192.7 774.6 L202.4 780.1 Z" fill="#000"/>
<text x="131.3" y="777.7" font-family="Liberation Sans, sans-serif" font-size="10.0" fill="#2ab6a8" textLength="43.5" lengthAdjust="spacingAndGlyphs" text-anchor="start">Sample3</text>
<path d="M178.0 797.0 L210.4 797.0" fill="none" stroke="#000" stroke-width="3.2" stroke-linecap="butt" stroke-linejoin="miter"/>
<path d="M186.6 791.5 L196.3 797.0 L186.6 802.5 Z M202.4 791.5 L192.7 797.0 L202.4 802.5 Z" fill="#000"/>
<text x="131.3" y="800.1" font-family="Liberation Sans, sans-serif" font-size="10.0" fill="#2ab6a8" textLength="43.5" lengthAdjust="spacingAndGlyphs" text-anchor="start">Sample4</text>
<path d="M241.7 720.8 L227.7 720.8 L227.7 711.3 L210.9 711.3 L210.9 816.5 L227.7 816.5 L227.7 727.6 L241.7 727.6" fill="none" stroke="#000" stroke-width="3.1" stroke-linecap="butt" stroke-linejoin="miter"/>
<text x="178.5" y="715.7" font-family="Liberation Sans, sans-serif" font-size="10.5" fill="#000" font-weight="bold" textLength="16.5" lengthAdjust="spacingAndGlyphs" text-anchor="start">V3</text>
<path d="M152.0 651.0 L168.4 651.0 L168.4 665.0" fill="none" stroke="#000" stroke-width="3.2" stroke-linecap="butt" stroke-linejoin="miter"/>
<path d="M152.0 696.3 L168.4 696.3 L168.4 682.5" fill="none" stroke="#000" stroke-width="3.2" stroke-linecap="butt" stroke-linejoin="miter"/>
<circle cx="133.8" cy="651.0" r="14.6" fill="#fff" stroke="#000" stroke-width="1.3"/>
<path d="M124.5 646.2 L139.4 646.2" fill="none" stroke="#000" stroke-width="1.6" stroke-linecap="butt" stroke-linejoin="miter"/>
<path d="M124.5 656.4 L139.4 656.4" fill="none" stroke="#000" stroke-width="1.6" stroke-linecap="butt" stroke-linejoin="miter"/>
<path d="M139.4 641.6 L139.4 660.4" fill="none" stroke="#000" stroke-width="1.8" stroke-linecap="butt" stroke-linejoin="miter"/>
<path d="M149.0 648.0 L149.0 654.0" fill="none" stroke="#666" stroke-width="1.0" stroke-linecap="butt" stroke-linejoin="miter"/>
<path d="M150.7 648.6 L150.7 653.4" fill="none" stroke="#666" stroke-width="1.0" stroke-linecap="butt" stroke-linejoin="miter"/>
<circle cx="133.8" cy="696.3" r="14.6" fill="#fff" stroke="#000" stroke-width="1.3"/>
<path d="M124.5 691.5 L139.4 691.5" fill="none" stroke="#000" stroke-width="1.6" stroke-linecap="butt" stroke-linejoin="miter"/>
<path d="M124.5 701.7 L139.4 701.7" fill="none" stroke="#000" stroke-width="1.6" stroke-linecap="butt" stroke-linejoin="miter"/>
<path d="M139.4 686.9 L139.4 705.7" fill="none" stroke="#000" stroke-width="1.8" stroke-linecap="butt" stroke-linejoin="miter"/>
<path d="M149.0 693.3 L149.0 699.3" fill="none" stroke="#666" stroke-width="1.0" stroke-linecap="butt" stroke-linejoin="miter"/>
<path d="M150.7 693.9 L150.7 698.7" fill="none" stroke="#666" stroke-width="1.0" stroke-linecap="butt" stroke-linejoin="miter"/>
<text x="116.8" y="634.9" font-family="Liberation Sans, sans-serif" font-size="10.0" fill="#111" textLength="33.5" lengthAdjust="spacingAndGlyphs" text-anchor="start">PumpA</text>
<text x="116.8" y="680.2" font-family="Liberation Sans, sans-serif" font-size="10.0" fill="#111" textLength="33.5" lengthAdjust="spacingAndGlyphs" text-anchor="start">PumpB</text>
<path d="M166 664.8 H170.6 V670.4 H173.4 V677.2 H170.6 V682.8 H166 Z" fill="#fff" stroke="#000" stroke-width="1"/>
<rect x="154.2" y="638.0" width="9.7" height="9.8" fill="#66f3f3"/>
<text x="159.1" y="646.2" font-family="Liberation Sans, sans-serif" font-size="11.0" fill="#007288" font-weight="bold" text-anchor="middle">1</text>
<rect x="154.2" y="655.6" width="9.7" height="9.6" fill="#66f3f3"/>
<text x="159.1" y="663.6" font-family="Liberation Sans, sans-serif" font-size="11.0" fill="#007288" font-weight="bold" text-anchor="middle">2</text>
<rect x="194.5" y="642.5" width="89.8" height="38.6" fill="none" stroke="#a9a9a9" stroke-width="3.0"/>
<path d="M173.8 673.7 L207.2 673.7" fill="none" stroke="#000" stroke-width="3.2" stroke-linecap="butt" stroke-linejoin="miter"/>
<text x="184.7" y="640.0" font-family="Liberation Sans, sans-serif" font-size="10.5" fill="#000" font-weight="bold" textLength="16.5" lengthAdjust="spacingAndGlyphs" text-anchor="start">V4</text>
<path d="M205.7 675.2 L205.7 634.5 L232.0 634.5 L232.0 628.5" fill="none" stroke="#000" stroke-width="3.2" stroke-linecap="butt" stroke-linejoin="miter"/>
<path d="M244.4 628.5 L244.4 634.5 L273.1 634.5 L273.1 672.5" fill="none" stroke="#000" stroke-width="3.2" stroke-linecap="butt" stroke-linejoin="miter"/>
<rect x="229.2" y="608.8" width="18.1" height="19.6" fill="#fff" stroke="#000" stroke-width="1.1"/>
<path d="M238.2 608.0 L238.2 605.0" fill="none" stroke="#000" stroke-width="1.0" stroke-linecap="butt" stroke-linejoin="miter"/>
<path d="M237.0 604.9 L239.6 604.9" fill="none" stroke="#000" stroke-width="1.0" stroke-linecap="butt" stroke-linejoin="miter"/>
<path d="M200.1 649.7 L205.7 659.3 L211.3 649.7 Z M200.1 665.3 L205.7 655.7 L211.3 665.3 Z" fill="#000"/>
<path d="M267.5 649.7 L273.1 659.3 L278.7 649.7 Z M267.5 665.3 L273.1 655.7 L278.7 665.3 Z" fill="#000"/>
<path d="M207.2 673.7 L308.0 673.7 L308.0 634.5 L350.6 634.5 L350.6 730.0 L393.8 730.0 L393.8 759.2 L514.2 759.2 L514.2 591.8 L393.8 591.8 L393.8 662.1 L350.6 662.1" fill="none" stroke="#60ea60" stroke-width="3.2" stroke-linecap="butt" stroke-linejoin="miter"/>
<path d="M514.2 674.7 L574.4 674.7 L574.4 788.5 L594.2 788.5 L594.2 768.0" fill="none" stroke="#60ea60" stroke-width="3.2" stroke-linecap="butt" stroke-linejoin="miter"/>
<path d="M216.9 668.2 L226.6 673.7 L216.9 679.2 Z M232.7 668.2 L223.0 673.7 L232.7 679.2 Z" fill="#60ea60"/>
<path d="M245.7 668.2 L255.4 673.7 L245.7 679.2 Z M261.5 668.2 L251.8 673.7 L261.5 679.2 Z" fill="#60ea60"/>
<rect x="311.5" y="619.9" width="22.6" height="11.2" fill="#5cd646" stroke="#0c480c" stroke-width="1.2"/>
<text x="322.8" y="629.7" font-family="Liberation Sans, sans-serif" font-size="10.5" fill="#064006" textLength="19.5" lengthAdjust="spacingAndGlyphs" stroke="#064006" stroke-width="0.30" text-anchor="middle">AS1</text>
<rect x="338.5" y="620.6" width="9.4" height="11.4" fill="#66f3f3"/>
<text x="343.2" y="630.4" font-family="Liberation Sans, sans-serif" font-size="11.0" fill="#007288" font-weight="bold" text-anchor="middle">3</text>
<rect x="319.0" y="651.6" width="63.4" height="89.2" fill="none" stroke="#a9a9a9" stroke-width="3.0"/>
<text x="318.4" y="649.0" font-family="Liberation Sans, sans-serif" font-size="10.5" fill="#000" font-weight="bold" textLength="16.5" lengthAdjust="spacingAndGlyphs" text-anchor="start">V5</text>
<path d="M350.6 634.5 L350.6 730.0 L393.8 730.0" fill="none" stroke="#60ea60" stroke-width="3.2" stroke-linecap="butt" stroke-linejoin="miter"/>
<path d="M393.8 662.1 L350.6 662.1" fill="none" stroke="#60ea60" stroke-width="3.2" stroke-linecap="butt" stroke-linejoin="miter"/>
<path d="M359.1 656.6 L368.8 662.1 L359.1 667.6 Z M374.9 656.6 L365.2 662.1 L374.9 667.6 Z" fill="#60ea60"/>
<path d="M359.1 724.5 L368.8 730.0 L359.1 735.5 Z M374.9 724.5 L365.2 730.0 L374.9 735.5 Z" fill="#60ea60"/>
<path d="M274.5 724.4 L296.6 724.4 L296.6 685.0 L348.2 685.0" fill="none" stroke="#000" stroke-width="3.2" stroke-linecap="butt" stroke-linejoin="miter"/>
<path d="M326.6 679.5 L336.3 685.0 L326.6 690.5 Z M342.4 679.5 L332.7 685.0 L342.4 690.5 Z" fill="#000"/>
<path d="M348.2 707.6 L308.4 707.6 L308.4 765.0" fill="none" stroke="#000" stroke-width="3.2" stroke-linecap="butt" stroke-linejoin="miter"/>
<path d="M326.6 702.1 L336.3 707.6 L326.6 713.1 Z M342.4 702.1 L332.7 707.6 L342.4 713.1 Z" fill="#000"/>
<path d="M308.4 764.0 L308.4 777.8" fill="none" stroke="#000" stroke-width="2.6" stroke-linecap="butt" stroke-linejoin="miter"/>
<path d="M300.6 764.6 L308.4 772.0 L316.2 764.6" fill="none" stroke="#000" stroke-width="2.4" stroke-linecap="butt" stroke-linejoin="miter"/>
<text x="288.0" y="788.0" font-family="Liberation Sans, sans-serif" font-size="10.0" fill="#2ab6a8" textLength="40.5" lengthAdjust="spacingAndGlyphs" text-anchor="start">Waste2</text>
<circle cx="256.7" cy="724.4" r="14.6" fill="#fff" stroke="#000" stroke-width="1.3"/>
<path d="M247.4 719.6 L262.3 719.6" fill="none" stroke="#000" stroke-width="1.6" stroke-linecap="butt" stroke-linejoin="miter"/>
<path d="M247.4 729.8 L262.3 729.8" fill="none" stroke="#000" stroke-width="1.6" stroke-linecap="butt" stroke-linejoin="miter"/>
<path d="M262.3 715.0 L262.3 733.8" fill="none" stroke="#000" stroke-width="1.8" stroke-linecap="butt" stroke-linejoin="miter"/>
<path d="M271.9 721.4 L271.9 727.4" fill="none" stroke="#666" stroke-width="1.0" stroke-linecap="butt" stroke-linejoin="miter"/>
<path d="M273.6 722.0 L273.6 726.8" fill="none" stroke="#666" stroke-width="1.0" stroke-linecap="butt" stroke-linejoin="miter"/>
<text x="239.4" y="699.4" font-family="Liberation Sans, sans-serif" font-size="10.0" fill="#111" textLength="37.5" lengthAdjust="spacingAndGlyphs" text-anchor="start">Sample</text>
<text x="239.4" y="709.1" font-family="Liberation Sans, sans-serif" font-size="10.0" fill="#111" textLength="26.5" lengthAdjust="spacingAndGlyphs" text-anchor="start">Pump</text>
<rect x="276.9" y="711.2" width="9.4" height="10.4" fill="#66f3f3"/>
<text x="281.6" y="720.0" font-family="Liberation Sans, sans-serif" font-size="11.0" fill="#007288" font-weight="bold" text-anchor="middle">4</text>
<rect x="276.9" y="728.4" width="9.4" height="9.9" fill="#66f3f3"/>
<text x="281.6" y="736.7" font-family="Liberation Sans, sans-serif" font-size="11.0" fill="#007288" font-weight="bold" text-anchor="middle">5</text>
<rect x="152.5" y="805.6" width="22.8" height="11" fill="#5cd646" stroke="#0c480c" stroke-width="1.2"/>
<text x="163.9" y="815.3" font-family="Liberation Sans, sans-serif" font-size="10.5" fill="#064006" textLength="19.5" lengthAdjust="spacingAndGlyphs" stroke="#064006" stroke-width="0.30" text-anchor="middle">AS2</text>
<rect x="415.9" y="583.9" width="90.1" height="39.0" fill="none" stroke="#a9a9a9" stroke-width="3.0"/>
<rect x="415.9" y="728.1" width="90.1" height="38.9" fill="none" stroke="#a9a9a9" stroke-width="3.0"/>
<text x="415.0" y="580.9" font-family="Liberation Sans, sans-serif" font-size="10.5" fill="#000" font-weight="bold" textLength="16.5" lengthAdjust="spacingAndGlyphs" text-anchor="start">V7</text>
<text x="415.0" y="779.0" font-family="Liberation Sans, sans-serif" font-size="10.5" fill="#000" font-weight="bold" textLength="16.5" lengthAdjust="spacingAndGlyphs" text-anchor="start">V6</text>
<path d="M393.8 759.2 L514.2 759.2 L514.2 591.8 L393.8 591.8" fill="none" stroke="#60ea60" stroke-width="3.2" stroke-linecap="butt" stroke-linejoin="miter"/>
<path d="M427.2 594.3 L427.2 662.5" fill="none" stroke="#000" stroke-width="3.2" stroke-linecap="butt" stroke-linejoin="miter"/>
<path d="M427.2 689.0 L427.2 756.8" fill="none" stroke="#000" stroke-width="3.2" stroke-linecap="butt" stroke-linejoin="miter"/>
<path d="M421.6 599.8 L427.2 609.4 L432.8 599.8 Z M421.6 615.4 L427.2 605.8 L432.8 615.4 Z" fill="#000"/>
<path d="M421.6 735.2 L427.2 744.8 L432.8 735.2 Z M421.6 750.8 L427.2 741.2 L432.8 750.8 Z" fill="#000"/>
<rect x="411.0" y="663" width="32.4" height="26" fill="#fff" stroke="#000" stroke-width="1"/>
<path d="M408.4 662.7 L446.0 662.7" fill="none" stroke="#000" stroke-width="2.8" stroke-linecap="butt" stroke-linejoin="miter"/>
<path d="M408.4 688.9 L446.0 688.9" fill="none" stroke="#000" stroke-width="2.8" stroke-linecap="butt" stroke-linejoin="miter"/>
<text x="427.2" y="674.6" font-family="Liberation Sans, sans-serif" font-size="8.2" fill="#2ab6a8" textLength="28.5" lengthAdjust="spacingAndGlyphs" text-anchor="middle">Column</text>
<text x="427.2" y="683.3" font-family="Liberation Sans, sans-serif" font-size="8.2" fill="#2ab6a8" text-anchor="middle">1</text>
<path d="M472.2 594.3 L472.2 662.5" fill="none" stroke="#000" stroke-width="3.2" stroke-linecap="butt" stroke-linejoin="miter"/>
<path d="M472.2 689.0 L472.2 756.8" fill="none" stroke="#000" stroke-width="3.2" stroke-linecap="butt" stroke-linejoin="miter"/>
<path d="M466.6 599.8 L472.2 609.4 L477.8 599.8 Z M466.6 615.4 L472.2 605.8 L477.8 615.4 Z" fill="#000"/>
<path d="M466.6 735.2 L472.2 744.8 L477.8 735.2 Z M466.6 750.8 L472.2 741.2 L477.8 750.8 Z" fill="#000"/>
<rect x="456.0" y="663" width="32.4" height="26" fill="#fff" stroke="#000" stroke-width="1"/>
<path d="M453.4 662.7 L491.0 662.7" fill="none" stroke="#000" stroke-width="2.8" stroke-linecap="butt" stroke-linejoin="miter"/>
<path d="M453.4 688.9 L491.0 688.9" fill="none" stroke="#000" stroke-width="2.8" stroke-linecap="butt" stroke-linejoin="miter"/>
<text x="472.2" y="674.6" font-family="Liberation Sans, sans-serif" font-size="8.2" fill="#2ab6a8" textLength="28.5" lengthAdjust="spacingAndGlyphs" text-anchor="middle">Column</text>
<text x="472.2" y="683.3" font-family="Liberation Sans, sans-serif" font-size="8.2" fill="#2ab6a8" text-anchor="middle">2</text>
<path d="M441.3 586.3 L451.0 591.8 L441.3 597.3 Z M457.1 586.3 L447.4 591.8 L457.1 597.3 Z" fill="#60ea60"/>
<path d="M441.3 753.7 L451.0 759.2 L441.3 764.7 Z M457.1 753.7 L447.4 759.2 L457.1 764.7 Z" fill="#60ea60"/>
<path d="M482.7 586.3 L492.4 591.8 L482.7 597.3 Z M498.5 586.3 L488.8 591.8 L498.5 597.3 Z" fill="#60ea60"/>
<path d="M482.7 753.7 L492.4 759.2 L482.7 764.7 Z M498.5 753.7 L488.8 759.2 L498.5 764.7 Z" fill="#60ea60"/>
<rect x="521.1" y="660.9" width="8.6" height="11.1" fill="#66f3f3"/>
<text x="525.4" y="670.4" font-family="Liberation Sans, sans-serif" font-size="11.0" fill="#007288" font-weight="bold" text-anchor="middle">6</text>
<rect x="532.6" y="660.9" width="8.6" height="11.1" fill="#66f3f3"/>
<text x="537.0" y="670.4" font-family="Liberation Sans, sans-serif" font-size="11.0" fill="#007288" font-weight="bold" text-anchor="middle">7</text>
<rect x="544.2" y="660.9" width="8.6" height="11.1" fill="#66f3f3"/>
<text x="548.5" y="670.4" font-family="Liberation Sans, sans-serif" font-size="11.0" fill="#007288" font-weight="bold" text-anchor="middle">8</text>
<rect x="555.8" y="660.9" width="8.6" height="11.1" fill="#66f3f3"/>
<text x="560.0" y="670.4" font-family="Liberation Sans, sans-serif" font-size="11.0" fill="#007288" font-weight="bold" text-anchor="middle">9</text>
<rect x="585.9" y="567.1" width="39.6" height="89.8" fill="none" stroke="#a9a9a9" stroke-width="3.0"/>
<rect x="585.9" y="690.8" width="39.6" height="90.0" fill="none" stroke="#a9a9a9" stroke-width="3.0"/>
<text x="609.6" y="563.2" font-family="Liberation Sans, sans-serif" font-size="10.5" fill="#000" font-weight="bold" textLength="16.5" lengthAdjust="spacingAndGlyphs" text-anchor="start">V9</text>
<text x="609.6" y="687.2" font-family="Liberation Sans, sans-serif" font-size="10.5" fill="#000" font-weight="bold" textLength="16.5" lengthAdjust="spacingAndGlyphs" text-anchor="start">V8</text>
<path d="M593.9 576.5 L593.9 770.3" fill="none" stroke="#000" stroke-width="3.2" stroke-linecap="butt" stroke-linejoin="miter"/>
<path d="M593.9 578.0 L627.0 578.0" fill="none" stroke="#000" stroke-width="3.2" stroke-linecap="butt" stroke-linejoin="miter"/>
<path d="M602.4 572.5 L612.1 578.0 L602.4 583.5 Z M618.2 572.5 L608.5 578.0 L618.2 583.5 Z" fill="#000"/>
<text x="628.8" y="581.1" font-family="Liberation Sans, sans-serif" font-size="10.0" fill="#2ab6a8" textLength="46.8" lengthAdjust="spacingAndGlyphs" text-anchor="start">WasteF1</text>
<path d="M593.9 600.4 L627.0 600.4" fill="none" stroke="#000" stroke-width="3.2" stroke-linecap="butt" stroke-linejoin="miter"/>
<path d="M602.4 594.9 L612.1 600.4 L602.4 605.9 Z M618.2 594.9 L608.5 600.4 L618.2 605.9 Z" fill="#000"/>
<text x="628.8" y="603.5" font-family="Liberation Sans, sans-serif" font-size="10.0" fill="#2ab6a8" textLength="51.2" lengthAdjust="spacingAndGlyphs" text-anchor="start">OutletF2</text>
<path d="M593.9 622.8 L627.0 622.8" fill="none" stroke="#000" stroke-width="3.2" stroke-linecap="butt" stroke-linejoin="miter"/>
<path d="M602.4 617.3 L612.1 622.8 L602.4 628.3 Z M618.2 617.3 L608.5 622.8 L618.2 628.3 Z" fill="#000"/>
<text x="628.8" y="625.9" font-family="Liberation Sans, sans-serif" font-size="10.0" fill="#2ab6a8" textLength="51.2" lengthAdjust="spacingAndGlyphs" text-anchor="start">OutletF3</text>
<path d="M593.9 645.2 L627.0 645.2" fill="none" stroke="#000" stroke-width="3.2" stroke-linecap="butt" stroke-linejoin="miter"/>
<path d="M602.4 639.7 L612.1 645.2 L602.4 650.7 Z M618.2 639.7 L608.5 645.2 L618.2 650.7 Z" fill="#000"/>
<text x="628.8" y="648.3" font-family="Liberation Sans, sans-serif" font-size="10.0" fill="#2ab6a8" textLength="51.2" lengthAdjust="spacingAndGlyphs" text-anchor="start">OutletF4</text>
<path d="M593.9 701.6 L627.0 701.6" fill="none" stroke="#000" stroke-width="3.2" stroke-linecap="butt" stroke-linejoin="miter"/>
<path d="M602.4 696.1 L612.1 701.6 L602.4 707.1 Z M618.2 696.1 L608.5 701.6 L618.2 707.1 Z" fill="#000"/>
<text x="628.8" y="704.7" font-family="Liberation Sans, sans-serif" font-size="10.0" fill="#2ab6a8" textLength="51.2" lengthAdjust="spacingAndGlyphs" text-anchor="start">OutletF5</text>
<path d="M593.9 724.0 L627.0 724.0" fill="none" stroke="#000" stroke-width="3.2" stroke-linecap="butt" stroke-linejoin="miter"/>
<path d="M602.4 718.5 L612.1 724.0 L602.4 729.5 Z M618.2 718.5 L608.5 724.0 L618.2 729.5 Z" fill="#000"/>
<text x="628.8" y="727.1" font-family="Liberation Sans, sans-serif" font-size="10.0" fill="#2ab6a8" textLength="51.2" lengthAdjust="spacingAndGlyphs" text-anchor="start">OutletF6</text>
<path d="M593.9 746.4 L627.0 746.4" fill="none" stroke="#000" stroke-width="3.2" stroke-linecap="butt" stroke-linejoin="miter"/>
<path d="M602.4 740.9 L612.1 746.4 L602.4 751.9 Z M618.2 740.9 L608.5 746.4 L618.2 751.9 Z" fill="#000"/>
<text x="628.8" y="749.5" font-family="Liberation Sans, sans-serif" font-size="10.0" fill="#2ab6a8" textLength="51.2" lengthAdjust="spacingAndGlyphs" text-anchor="start">OutletF7</text>
<path d="M593.9 768.8 L627.0 768.8" fill="none" stroke="#000" stroke-width="3.2" stroke-linecap="butt" stroke-linejoin="miter"/>
<path d="M602.4 763.3 L612.1 768.8 L602.4 774.3 Z M618.2 763.3 L608.5 768.8 L618.2 774.3 Z" fill="#000"/>
<text x="628.8" y="771.9" font-family="Liberation Sans, sans-serif" font-size="10.0" fill="#2ab6a8" textLength="51.2" lengthAdjust="spacingAndGlyphs" text-anchor="start">OutletF8</text>
<path d="M594.2 788.5 L594.2 768.0" fill="none" stroke="#60ea60" stroke-width="3.2" stroke-linecap="butt" stroke-linejoin="miter"/>
<rect x="182.6" y="824.4" width="347.8" height="65.2" fill="#66fcfc" stroke="#0c3c44" stroke-width="1.4"/>
<rect x="265.8" y="826.4" width="46.0" height="14.5" fill="#fff"/>
<text x="188.0" y="838.7" font-family="Liberation Sans, sans-serif" font-size="10.5" fill="#08262c" stroke="#08262c" stroke-width="0.35" text-anchor="start">1</text>
<text x="200.8" y="838.7" font-family="Liberation Sans, sans-serif" font-size="10.5" fill="#08262c" textLength="38.1" lengthAdjust="spacingAndGlyphs" stroke="#08262c" stroke-width="0.35" text-anchor="start">FlowAB</text>
<text x="310.4" y="838.9" font-family="Liberation Mono, monospace" font-size="13.5" fill="#000" font-weight="bold" textLength="26.4" lengthAdjust="spacingAndGlyphs" stroke="#000" stroke-width="0.45" text-anchor="end">0.0</text>
<text x="315.9" y="838.7" font-family="Liberation Sans, sans-serif" font-size="10.5" fill="#08262c" textLength="38.0" lengthAdjust="spacingAndGlyphs" stroke="#08262c" stroke-width="0.35" text-anchor="start">ml/min</text>
<rect x="273.5" y="842.1" width="38.3" height="14.5" fill="#fff"/>
<text x="188.0" y="854.4" font-family="Liberation Sans, sans-serif" font-size="10.5" fill="#08262c" stroke="#08262c" stroke-width="0.35" text-anchor="start">2</text>
<text x="200.8" y="854.4" font-family="Liberation Sans, sans-serif" font-size="10.5" fill="#08262c" textLength="38.5" lengthAdjust="spacingAndGlyphs" stroke="#08262c" stroke-width="0.35" text-anchor="start">Press1</text>
<text x="310.4" y="854.6" font-family="Liberation Mono, monospace" font-size="13.5" fill="#000" font-weight="bold" textLength="35.2" lengthAdjust="spacingAndGlyphs" stroke="#000" stroke-width="0.45" text-anchor="end">0.00</text>
<text x="315.9" y="854.4" font-family="Liberation Sans, sans-serif" font-size="10.5" fill="#08262c" textLength="20.9" lengthAdjust="spacingAndGlyphs" stroke="#08262c" stroke-width="0.35" text-anchor="start">MPa</text>
<rect x="273.5" y="857.5" width="38.3" height="14.5" fill="#fff"/>
<text x="188.0" y="869.8" font-family="Liberation Sans, sans-serif" font-size="10.5" fill="#08262c" stroke="#08262c" stroke-width="0.35" text-anchor="start">3</text>
<text x="200.8" y="869.8" font-family="Liberation Sans, sans-serif" font-size="10.5" fill="#08262c" textLength="39.5" lengthAdjust="spacingAndGlyphs" stroke="#08262c" stroke-width="0.35" text-anchor="start">Press2</text>
<text x="310.4" y="870.0" font-family="Liberation Mono, monospace" font-size="13.5" fill="#000" font-weight="bold" textLength="35.2" lengthAdjust="spacingAndGlyphs" stroke="#000" stroke-width="0.45" text-anchor="end">0.01</text>
<text x="315.9" y="869.8" font-family="Liberation Sans, sans-serif" font-size="10.5" fill="#08262c" textLength="20.9" lengthAdjust="spacingAndGlyphs" stroke="#08262c" stroke-width="0.35" text-anchor="start">MPa</text>
<rect x="265.8" y="873.3" width="46.0" height="14.5" fill="#fff"/>
<text x="188.0" y="885.6" font-family="Liberation Sans, sans-serif" font-size="10.5" fill="#08262c" stroke="#08262c" stroke-width="0.35" text-anchor="start">4</text>
<text x="200.8" y="885.6" font-family="Liberation Sans, sans-serif" font-size="10.5" fill="#08262c" textLength="62.7" lengthAdjust="spacingAndGlyphs" stroke="#08262c" stroke-width="0.35" text-anchor="start">SampleFlow</text>
<text x="310.4" y="885.8" font-family="Liberation Mono, monospace" font-size="13.5" fill="#000" font-weight="bold" textLength="26.4" lengthAdjust="spacingAndGlyphs" stroke="#000" stroke-width="0.45" text-anchor="end">0.0</text>
<text x="315.9" y="885.6" font-family="Liberation Sans, sans-serif" font-size="10.5" fill="#08262c" textLength="38.0" lengthAdjust="spacingAndGlyphs" stroke="#08262c" stroke-width="0.35" text-anchor="start">ml/min</text>
<rect x="437.8" y="826.4" width="46.2" height="14.5" fill="#fff"/>
<text x="366.8" y="838.7" font-family="Liberation Sans, sans-serif" font-size="10.5" fill="#08262c" stroke="#08262c" stroke-width="0.35" text-anchor="start">7</text>
<text x="380.0" y="838.7" font-family="Liberation Sans, sans-serif" font-size="10.5" fill="#08262c" textLength="13.0" lengthAdjust="spacingAndGlyphs" stroke="#08262c" stroke-width="0.35" text-anchor="start">pH</text>
<text x="482.2" y="838.9" font-family="Liberation Mono, monospace" font-size="13.5" fill="#000" font-weight="bold" textLength="43.5" lengthAdjust="spacingAndGlyphs" stroke="#000" stroke-width="0.45" text-anchor="end">14.00</text>
<rect x="419.6" y="842.1" width="64.4" height="14.5" fill="#fff"/>
<text x="366.8" y="854.4" font-family="Liberation Sans, sans-serif" font-size="10.5" fill="#08262c" stroke="#08262c" stroke-width="0.35" text-anchor="start">8</text>
<text x="380.0" y="854.4" font-family="Liberation Sans, sans-serif" font-size="10.5" fill="#08262c" textLength="26.6" lengthAdjust="spacingAndGlyphs" stroke="#08262c" stroke-width="0.35" text-anchor="start">Cond</text>
<text x="482.2" y="854.6" font-family="Liberation Mono, monospace" font-size="13.5" fill="#000" font-weight="bold" textLength="43.5" lengthAdjust="spacingAndGlyphs" stroke="#000" stroke-width="0.45" text-anchor="end">0.146</text>
<text x="488.3" y="854.4" font-family="Liberation Sans, sans-serif" font-size="10.5" fill="#08262c" textLength="35.4" lengthAdjust="spacingAndGlyphs" stroke="#08262c" stroke-width="0.35" text-anchor="start">mS/cm</text>
<rect x="401.9" y="857.5" width="82.1" height="14.5" fill="#fff"/>
<text x="366.8" y="869.8" font-family="Liberation Sans, sans-serif" font-size="10.5" fill="#08262c" stroke="#08262c" stroke-width="0.35" text-anchor="start">9</text>
<text x="380.0" y="869.8" font-family="Liberation Sans, sans-serif" font-size="10.5" fill="#08262c" textLength="18.8" lengthAdjust="spacingAndGlyphs" stroke="#08262c" stroke-width="0.35" text-anchor="start">UV1</text>
<text x="482.2" y="870.0" font-family="Liberation Mono, monospace" font-size="13.5" fill="#000" font-weight="bold" textLength="43.5" lengthAdjust="spacingAndGlyphs" stroke="#000" stroke-width="0.45" text-anchor="end">0.000</text>
<text x="488.3" y="869.8" font-family="Liberation Sans, sans-serif" font-size="10.5" fill="#08262c" textLength="19.8" lengthAdjust="spacingAndGlyphs" stroke="#08262c" stroke-width="0.35" text-anchor="start">mAU</text>
<rect x="401.9" y="873.3" width="82.1" height="14.5" fill="#fff"/>
<text x="380.0" y="885.6" font-family="Liberation Sans, sans-serif" font-size="10.5" fill="#08262c" textLength="19.8" lengthAdjust="spacingAndGlyphs" stroke="#08262c" stroke-width="0.35" text-anchor="start">UV2</text>
<text x="482.2" y="885.8" font-family="Liberation Mono, monospace" font-size="13.5" fill="#000" font-weight="bold" textLength="43.5" lengthAdjust="spacingAndGlyphs" stroke="#000" stroke-width="0.45" text-anchor="end">0.000</text>
<text x="488.3" y="885.6" font-family="Liberation Sans, sans-serif" font-size="10.5" fill="#08262c" textLength="19.8" lengthAdjust="spacingAndGlyphs" stroke="#08262c" stroke-width="0.35" text-anchor="start">mAU</text></g>
</svg>
<!--/FLOW-->

<div class="abs" style="left:0;top:1px;width:1727px;height:2px;background:#808080"></div>
<div class="abs" style="left:0;top:1px;width:1px;height:353px;background:#a8a8a8"></div><div class="abs" style="left:1px;top:1px;width:1px;height:346px;background:#808080"></div>
<div class="abs" style="left:1709px;top:3px;width:19px;height:344px;background:#f0f0f0"></div>
<div class="abs" style="left:1717px;top:22px;width:2px;height:200px;background:#7c7c7c"></div>
<div class="abs" style="left:0;top:346px;width:1728px;height:6px;background:linear-gradient(#f6f6f6,#e4e4e4)"></div>
<div class="abs" style="left:0;top:352px;width:1728px;height:2px;background:#747474"></div>
<div class="plabel" style="left:1607px;top:3px;width:96px;height:21px;background:#b9c9da;border-color:#6a7888 #fff #fff #6a7888;line-height:16px;font-size:13.2px">Flow Scheme</div>

</div>
<div id="status" class="abs">
<span style="left:2.5px;letter-spacing:-0.17px">For Help, press F1</span>
<svg class="abs" style="left:888px;top:3px" width="18" height="17"><circle cx="8.6" cy="8.4" r="6.4" fill="#fff" stroke="#111" stroke-width="1.3"/></svg>
<span style="left:907.6px;letter-spacing:-0.5px">End</span>
<span style="left:1377.5px;letter-spacing:0.38px">No watch</span>
<span style="left:1500.5px;letter-spacing:0.22px">Controlled By: default</span>
<i class="sep" style="left:970px"></i><i class="sep" style="left:1196px"></i><i class="sep" style="left:1269px"></i><i class="sep" style="left:1371px"></i><i class="sep" style="left:1494px"></i><i class="sep" style="left:1706px"></i>
</div>
<div id="taskbar" class="abs">
<!--TB-->
<div class="abs" style="left:0;top:0;width:1728px;height:1px;background:#d9d2dd"></div>
<div class="abs" style="left:1167px;top:5px;width:43.4px;height:43.6px;border-radius:5px;background:#f6f2fb;border:1px solid #eee8f5"></div>
<div class="abs" style="left:470px;top:9px;width:246px;height:36px;border-radius:18px;background:#fbf3fb;border:1px solid #e3d8e6"></div>
<span class="abs" style="left:510px;top:19.5px;font-size:14.8px;color:#5a5a5a">Search</span>
<span class="abs" style="left:1600px;top:10px;width:106px;text-align:right;font-size:12.8px;color:#1a1a1a">10:13</span>
<span class="abs" style="left:1600px;top:27.5px;width:106.4px;text-align:right;font-size:12.8px;color:#1a1a1a;letter-spacing:0.4px">25/09/2025</span>
<svg class="abs" style="left:0;top:0" width="1728" height="54" viewBox="0 918 1728 54">
<defs>
<linearGradient id="gw" x1="0" y1="0" x2="1" y2="1"><stop offset="0" stop-color="#3cc0f8"/><stop offset="1" stop-color="#0a66d0"/></linearGradient>
<linearGradient id="ge" x1="0" y1="0" x2="1" y2="1"><stop offset="0" stop-color="#35c1a0"/><stop offset="0.45" stop-color="#1b9de2"/><stop offset="1" stop-color="#0c59a4"/></linearGradient>
<linearGradient id="gc" x1="0" y1="0" x2="1" y2="1"><stop offset="0" stop-color="#2a7af0"/><stop offset="0.35" stop-color="#28c0b0"/><stop offset="0.6" stop-color="#f0b030"/><stop offset="0.8" stop-color="#f05a70"/><stop offset="1" stop-color="#b060f0"/></linearGradient>
<linearGradient id="gp" x1="0" y1="0" x2="1" y2="1"><stop offset="0" stop-color="#48c8f0"/><stop offset="1" stop-color="#1878c8"/></linearGradient>
<linearGradient id="ge2" x1="0" y1="0" x2="0.4" y2="1"><stop offset="0" stop-color="#1f86d8"/><stop offset="1" stop-color="#1457b0"/></linearGradient>
<linearGradient id="gg" x1="0" y1="0" x2="1" y2="0.6"><stop offset="0" stop-color="#2aa6dc"/><stop offset="0.55" stop-color="#34c69a"/><stop offset="1" stop-color="#5ed664"/></linearGradient>
<linearGradient id="gm" x1="0" y1="1" x2="1" y2="0"><stop offset="0" stop-color="#0f5cd6"/><stop offset="0.7" stop-color="#1a6ee4"/><stop offset="1" stop-color="#3a8af0"/></linearGradient>
<linearGradient id="gmb" x1="0" y1="1" x2="1" y2="0"><stop offset="0" stop-color="#9cc4f8"/><stop offset="1" stop-color="#ffffff"/></linearGradient>
<linearGradient id="gc1" x1="0" y1="0" x2="0" y2="1"><stop offset="0" stop-color="#2a86ee"/><stop offset="0.35" stop-color="#28b8d8"/><stop offset="0.65" stop-color="#5cc85a"/><stop offset="1" stop-color="#ecc81e"/></linearGradient>
<linearGradient id="gc2" x1="0" y1="0" x2="0" y2="1"><stop offset="0" stop-color="#b264f2"/><stop offset="0.45" stop-color="#ee5a9e"/><stop offset="1" stop-color="#f4782a"/></linearGradient>
<linearGradient id="gf" x1="0" y1="0" x2="0" y2="1"><stop offset="0" stop-color="#fbc63a"/><stop offset="1" stop-color="#f8d65e"/></linearGradient>
<linearGradient id="gcl" x1="0" y1="0" x2="0" y2="1"><stop offset="0" stop-color="#7c7c7c"/><stop offset="1" stop-color="#cfcfcf"/></linearGradient>
</defs>
<!-- widgets -->
<rect x="24.2" y="933" width="26" height="24.4" rx="2.5" fill="#1d63c4"/>
<rect x="26.2" y="935" width="9" height="20.4" rx="1" fill="#f4f6fb"/>
<rect x="37" y="935" width="11.2" height="9.6" fill="#56c4f6"/><rect x="37" y="945.6" width="11.2" height="4.2" fill="#2a9ae8"/><rect x="37" y="950.8" width="11.2" height="4.6" fill="#1f86dc"/>
<!-- start -->
<rect x="427.5" y="932.8" width="12.4" height="12.2" rx="1" fill="url(#gw)"/><rect x="441.3" y="932.8" width="12.4" height="12.2" rx="1" fill="url(#gw)"/>
<rect x="427.5" y="946.3" width="12.4" height="12.2" rx="1" fill="url(#gw)"/><rect x="441.3" y="946.3" width="12.4" height="12.2" rx="1" fill="url(#gw)"/>
<!-- magnifier -->
<circle cx="488.8" cy="943.2" r="5.6" fill="none" stroke="#222" stroke-width="1.6"/><line x1="492.8" y1="947.4" x2="497.6" y2="952.4" stroke="#222" stroke-width="1.9" stroke-linecap="round"/>
<!-- taskview -->
<rect x="736.5" y="932.7" width="19.6" height="17.4" rx="1.8" fill="#f9f6fa"/>
<rect x="730" y="939.2" width="20.4" height="18.3" rx="1.8" fill="#242424"/>
<path d="M736.5 939.2 H750.4 V950.1 H736.5 Z" fill="#b9b9b9"/>
<!-- copilot -->
<path d="M786 934 Q790 933 797.5 933.4 Q800.5 934.5 799.5 938 L793.5 949 Q792 951 789 950.6 L783 950.4 Q780 949.4 780.6 945.6 L783.4 936.4 Q784.2 934.4 786 934 Z" fill="url(#gc1)"/>
<path d="M795.5 933.4 Q799.6 933.6 800.4 937.4 L801 941 L796.4 941.4 Z" fill="#1d56d0"/>
<path d="M796 941 L802.8 941 Q806 941.8 805.2 945.4 L802 953.6 Q801 955.8 798.6 955.9 L790 956.2 Q787.2 955.6 788 952.4 L793.6 942.6 Q794.6 941.2 796 941 Z" fill="url(#gc2)"/>
<path d="M787.6 950.6 Q786.6 955.4 790 956.2 L792.4 951 Z" fill="#e84a2a"/>
<path d="M795.8 939.8 L792.4 949.2 Q790.8 950.4 791 948.6 L794.2 940.4 Q795 939.2 795.8 939.8 Z" fill="#f4ecf7"/>
<!-- explorer -->
<path d="M829 935.4 Q829 933.2 831.2 933.2 H838 Q839.4 933.2 840.2 934.2 L841.6 936 H829 Z" fill="#e6a61a"/>
<path d="M829 936 H853.8 Q856 936 856 938.2 V954.8 Q856 957 853.8 957 H831.2 Q829 957 829 954.8 Z" fill="url(#gf)"/>
<path d="M833.3 957 V953 Q833.3 950.5 835.8 950.5 H849 Q851.5 950.5 851.5 953 V957 Z" fill="#1b86de"/><rect x="836.2" y="953.5" width="12.4" height="1.4" rx="0.7" fill="#0c5cb0"/>
<!-- edge -->
<circle cx="891.6" cy="944.8" r="13.7" fill="url(#ge2)"/>
<path d="M879 938.5 Q884 930.6 893 931.2 Q903.5 932.6 905.2 942.5 Q905.6 949.5 898 950 Q893.5 949.5 895 945.6 Q896.5 941 891 939.2 Q884.5 938 879 938.5 Z" fill="url(#gg)"/>
<path d="M880.2 939.6 Q878 945 880.4 950 Q884 956.5 891 957.8 Q885 953 885.6 946.5 Q886.5 940.5 892 939.6 Q886 937.8 880.2 939.6 Z" fill="#2a9bd6" opacity="0.9"/>
<path d="M894.8 944.4 Q893.2 948.8 897.8 949.6 Q901.6 949.8 904 947.2 Q902.4 952 897.2 952.8 Q891.2 952.4 889.4 948 Q888.6 944.4 891.4 942.6 Q894.4 941.6 894.8 944.4 Z" fill="#ece6f4"/>
<!-- store -->
<path d="M928.4 935.8 H954 V954 Q954 958.2 949.8 958.2 H932.6 Q928.4 958.2 928.4 954 Z" fill="#1f4a86"/>
<path d="M935 936 V934.6 Q935 933.6 936 933.6 H941.6 Q942.6 933.6 942.6 934.6 V936" fill="none" stroke="#cfe3fb" stroke-width="1.3"/>
<rect x="936" y="942.5" width="4.3" height="4.5" fill="#ee5a36"/><rect x="941.6" y="942.5" width="4.3" height="4.5" fill="#7cc43c"/><rect x="936" y="948.3" width="4.3" height="4.5" fill="#28a6f0"/><rect x="941.6" y="948.3" width="4.3" height="4.5" fill="#f6c12a"/>
<circle cx="951.6" cy="934.4" r="8.7" fill="#1a78d2"/><text x="951.5" y="939.2" text-anchor="middle" font-size="13" fill="#fff" font-family="Liberation Sans, sans-serif">2</text>
<!-- MA -->
<rect x="977.4" y="931.5" width="27.1" height="26.6" fill="url(#gm)"/>
<path d="M981 951.5 H985.6 L993.6 938.5 H989 Z" fill="url(#gmb)"/><path d="M988.6 951.5 H993.2 L1000.6 938.5 H996.6 Z" fill="url(#gmb)"/>
<path d="M996.8 938.5 H1000.6 L1002.2 951.5 H998.4 Z" fill="#f4f8ff"/><circle cx="996.6" cy="950" r="1.2" fill="#f4f8ff"/>
<!-- outlook -->
<path d="M1034.4 938 L1044 932.6 L1054.2 939.4 V946 L1040 952 L1034.4 948 Z" fill="#1364b8"/>
<path d="M1042 934.2 L1044 932.6 L1054.2 939.4 L1046 944 Z" fill="#0d4f98"/>
<path d="M1040.7 948.5 L1054.2 941 V953.6 Q1054.2 956 1051.8 956.4 L1042.5 957 Q1040.7 957 1040.7 955 Z" fill="#46c2f2"/>
<path d="M1036 953 H1042 L1048 957 H1038 Q1036 957 1036 955 Z" fill="#1a86d6"/>
<rect x="1026.8" y="938.5" width="14" height="14.4" rx="1.6" fill="#0f69c6"/>
<circle cx="1033.7" cy="945.6" r="3.7" fill="none" stroke="#fff" stroke-width="2"/>
<!-- diamond colorful -->
<g>
<path d="M1088.6 932.2 V944.2 H1077.2 Z" fill="#181818"/><path d="M1091.8 932.2 V944.2 H1103.2 Z" fill="#181818"/>
<path d="M1088.6 958.4 V946.4 H1077.2 Z" fill="#181818"/><path d="M1091.8 958.4 V946.4 H1103.2 Z" fill="#181818"/>
<path d="M1087.8 932.4 V943 H1077.6 Z" fill="#22d022"/><path d="M1091.4 932.8 V943 H1101 Z" fill="#1414d8"/>
<path d="M1087.8 957.2 V946.8 H1078.4 Z" fill="#ec1414"/><path d="M1091.4 957 V946.8 H1101.2 Z" fill="#f6f614"/>
</g>
<!-- notepad -->
<g>
<path d="M1126 945 L1138.8 931.8 L1151.6 944.6 L1139.8 958 Z" fill="#fdfdfd" stroke="#3a3a3a" stroke-width="0.9"/>
<path d="M1130.5 945.5 l7.5 -7.5 M1133 948.2 l3 -3" stroke="#a8a8a8" stroke-width="0.8"/>
<path d="M1128.6 945 l0.8 0.8 M1130.6 947 l0.8 0.8" stroke="#555" stroke-width="0.9"/>
<path d="M1136.2 943.6 L1146.6 934.2 L1148.8 936.4 L1138.6 946 L1135.2 947 Z" fill="#eec428" stroke="#6a5210" stroke-width="0.7"/>
<path d="M1146.6 934.2 L1147.8 933.2 L1149.8 935.2 L1148.8 936.4 Z" fill="#58a848"/>
<rect x="1142.6" y="944" width="10" height="11.8" fill="#eef8ff" stroke="#1e1e2a" stroke-width="1.1"/><rect x="1144.2" y="950.6" width="6.8" height="4.2" fill="#3aa8e8"/>
<path d="M1147.6 945.5 v4.5 M1146.4 946.8 h2.4 M1146.4 948.6 h2.4" stroke="#555" stroke-width="0.6"/>
</g>
<!-- active 1 -->
<path d="M1189 931.2 L1203.2 944.9 L1189 958.6 L1174.9 944.9 Z" fill="#fff" stroke="#8a8a8a" stroke-width="0.8"/>
<path d="M1189 931.6 V958.2 M1175.4 944.9 H1202.8" stroke="#c0c0c0" stroke-width="0.7"/>
<path d="M1191.3 936.8 V953.2 H1187.3 V942.3 Q1185.6 943.6 1183.4 944.2 V941 Q1186.8 939.8 1188.3 936.8 Z" fill="#0b0b8e"/>
<rect x="1180.1" y="963.1" width="17.9" height="3.4" rx="1.7" fill="#1a73d8"/>
<!-- chart pen -->
<g>
<path d="M1225 944.6 L1237.4 931.6 L1250.6 944.6 L1238.6 958 Z" fill="#fdfdfd" stroke="#3a3a3a" stroke-width="0.9"/>
<path d="M1231.5 949.5 l3 -7 l1.6 4 l2.6 -8.5 l1.8 5.5 l2.6 -4" fill="none" stroke="#d83a6a" stroke-width="0.9"/>
<path d="M1230 944.5 l10 7" stroke="#4a5ac8" stroke-width="0.7"/>
<rect x="1241.6" y="943.8" width="10.2" height="12.5" rx="0.8" fill="#50545a" stroke="#22252a" stroke-width="0.8"/>
<rect x="1243" y="945.2" width="7.4" height="2.6" fill="#7ad07a"/>
<g fill="#b8d8b0"><rect x="1243" y="949" width="1.9" height="1.6"/><rect x="1245.8" y="949" width="1.9" height="1.6"/><rect x="1248.6" y="949" width="1.9" height="1.6"/><rect x="1243" y="951.4" width="1.9" height="1.6"/><rect x="1245.8" y="951.4" width="1.9" height="1.6"/><rect x="1248.6" y="951.4" width="1.9" height="1.6"/><rect x="1243" y="953.8" width="1.9" height="1.6"/><rect x="1245.8" y="953.8" width="1.9" height="1.6"/><rect x="1248.6" y="953.8" width="1.9" height="1.6"/></g>
</g>
<!-- paint -->
<path d="M1289 932.4 Q1300.2 933.4 1300.4 944 Q1300 949.4 1295.4 949.8 Q1291.4 949.8 1291 953.4 Q1290.8 958 1285.6 957.8 Q1275.2 956.4 1274.8 945 Q1275.6 932.8 1289 932.4 Z" fill="url(#gp)"/>
<circle cx="1281.2" cy="939.6" r="2.1" fill="#4ab85a"/><circle cx="1288.3" cy="937" r="2.1" fill="#e8c838"/><circle cx="1279.4" cy="945.4" r="2.1" fill="#b0604a"/><circle cx="1287.9" cy="946.7" r="1.8" fill="#eef6ff"/>
<path d="M1293.6 940.4 H1298.6 L1297.6 944.6 H1294.6 Z" fill="#e8d0a0"/><rect x="1294.6" y="944.6" width="3" height="1.8" fill="#b8b8c0"/><path d="M1294.8 946.4 H1297.4 L1297.6 958 H1294.6 Z" fill="#b07038"/>
<!-- indicators -->
<g fill="#8a8790"><rect x="1086.3" y="963.4" width="7" height="2.9" rx="1.45"/><rect x="1135.9" y="963.4" width="7" height="2.9" rx="1.45"/><rect x="1234.8" y="963.4" width="7" height="2.9" rx="1.45"/><rect x="1284.4" y="963.4" width="7" height="2.9" rx="1.45"/></g>
<!-- tray -->
<path d="M1477.8 947.4 L1483.3 941.9 L1488.8 947.4" fill="none" stroke="#1a1a1a" stroke-width="1.7" stroke-linecap="round" stroke-linejoin="round"/>
<path d="M1514.6 950.2 Q1510.8 950 1511 946.6 Q1511.4 943.6 1514.6 943.4 Q1515.4 938.6 1520 938.6 Q1524 938.8 1525 942.6 Q1527.8 943.2 1527.6 946.4 Q1527.4 950.2 1524 950.2 Z" fill="url(#gcl)" stroke="#242424" stroke-width="1.5"/>
<circle cx="1523.2" cy="949.3" r="4.6" fill="#f2eefa"/><path d="M1520.3 948.6 A3 3 0 0 1 1525.8 947.6 M1526.1 950 A3 3 0 0 1 1520.6 951" fill="none" stroke="#2a86cc" stroke-width="1.2"/>
<path d="M1525 946.2 l1.4 1.8 l0.8 -2.2 Z M1521.4 952.6 l-1.4 -1.8 l-0.8 2.2 Z" fill="#2a86cc"/>
<g fill="none" stroke="#1a1a1a" stroke-width="1.4"><circle cx="1554.7" cy="944.7" r="8.3"/><ellipse cx="1554.7" cy="944.7" rx="3.7" ry="8.3"/><path d="M1546.8 941.6 H1562.6 M1546.8 947.8 H1554.6"/></g>
<circle cx="1559.3" cy="949" r="5.4" fill="#e7e1f5"/><circle cx="1559.3" cy="949" r="4.1" fill="none" stroke="#1a1a1a" stroke-width="1.4"/><path d="M1556.5 951.8 L1562.1 946.2" stroke="#1a1a1a" stroke-width="1.3"/>
<path d="M1573.8 942.2 H1577 L1581 938.4 V951 L1577 947.2 H1573.8 Z" fill="none" stroke="#1a1a1a" stroke-width="1.4" stroke-linejoin="round"/>
<path d="M1583.4 941.8 Q1585.4 944.7 1583.4 947.6 M1585.6 939.4 Q1588.8 944.7 1585.6 950" fill="none" stroke="#1a1a1a" stroke-width="1.3" stroke-linecap="round"/>
<path d="M1588.6 937.8 Q1592 944.7 1588.6 951.6" fill="none" stroke="#bcb8c6" stroke-width="1" stroke-linecap="round"/>
<rect x="1601.3" y="939.8" width="15.4" height="10" rx="2.8" fill="none" stroke="#1a1a1a" stroke-width="1.5"/><path d="M1604.6 942.2 H1613.8 Q1614.4 942.2 1614.4 942.8 V946.8 Q1614.4 947.4 1613.8 947.4 H1603.6 Z" fill="#1a1a1a"/><path d="M1617.7 943.4 V946.4" stroke="#1a1a1a" stroke-width="1.8" stroke-linecap="round"/>
<path d="M1600 938.4 L1603.6 938.4 L1604.6 935.8 L1602.2 939.4 L1604.2 940.6 L1600.6 943.2 Z" fill="#e7e1f5" stroke="#1a1a1a" stroke-width="1.1" stroke-linejoin="round"/>
</svg>
<!--/TB-->
</div>
</body></html>
